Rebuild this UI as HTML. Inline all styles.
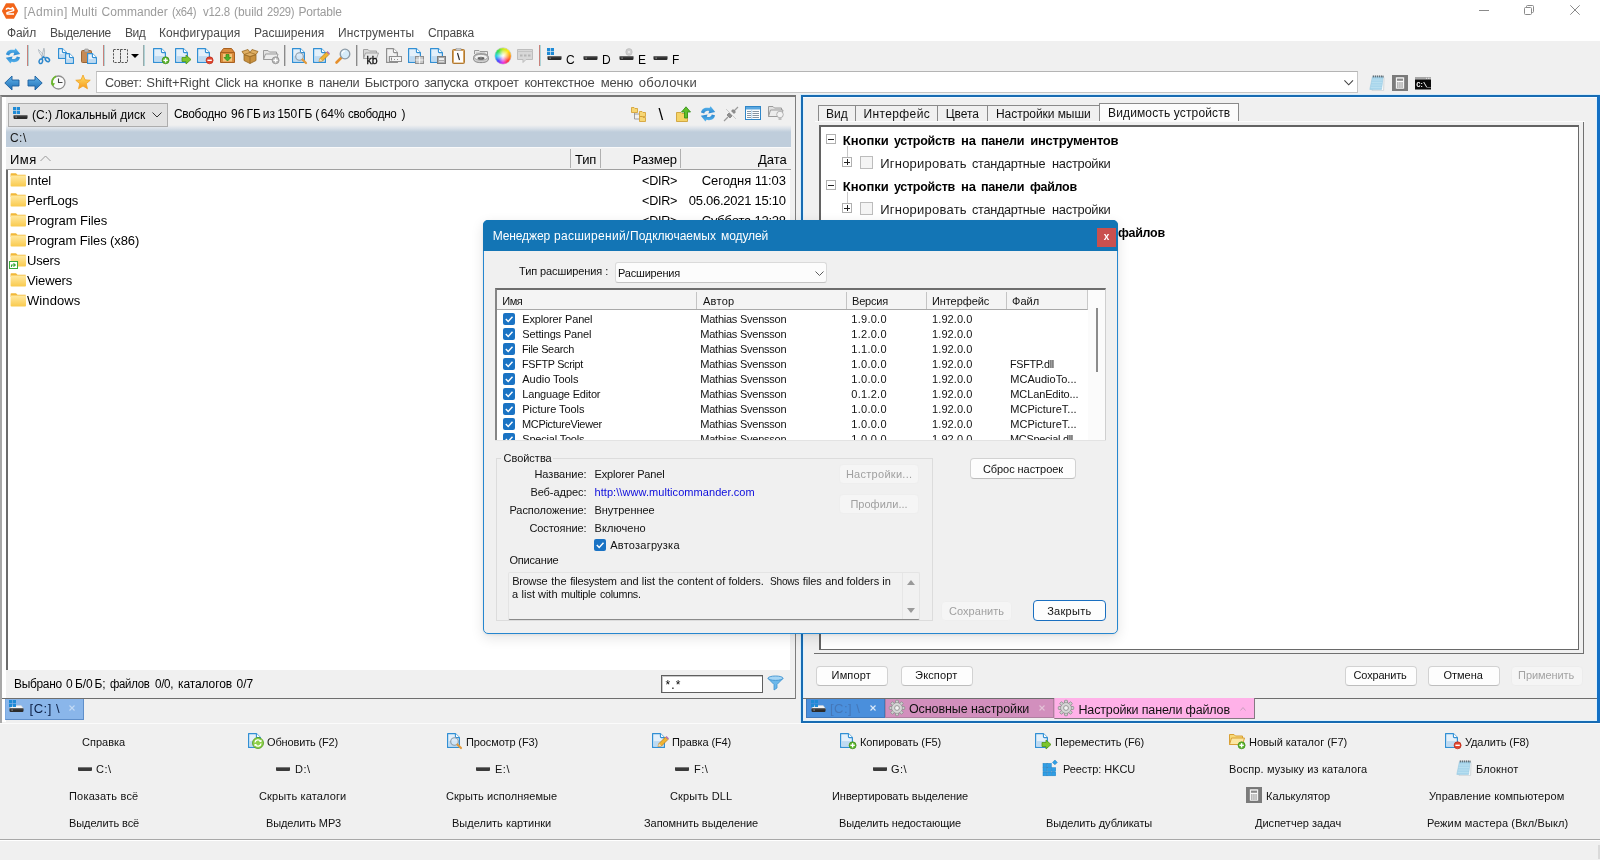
<!DOCTYPE html>
<html lang="ru"><head><meta charset="utf-8"><title>Multi Commander</title>
<style>
html,body{margin:0;padding:0;}
body{width:1600px;height:860px;overflow:hidden;background:#f0f0f0;position:relative;
 font-family:"Liberation Sans", "DejaVu Sans", sans-serif;font-size:12px;color:#000;}
#app{position:absolute;left:0;top:0;width:1600px;height:860px;will-change:transform;}
.b{position:absolute;box-sizing:border-box;}
.t{position:absolute;white-space:pre;}
svg{position:absolute;overflow:visible;}
</style></head>
<body>
<div id="app">
<div class="b " style="left:0px;top:0px;width:1600px;height:41px;background:#fff;"></div>
<svg style="left:2px;top:3px" width="16" height="16" viewBox="0 0 16 16"><path d="M4.6 1H11.4L15.2 8 11.4 15H4.6L.8 8Z" fill="#f2651a" stroke="#f2651a" stroke-width="1.6" stroke-linejoin="round"/><path d="M4 6.6C5 5 7 5 8 5.8L11.6 5.8M11.6 5.8L9.8 4.2M11.6 5.8V7.6L5 9.6V11H12" stroke="#fff" stroke-width="1.5" fill="none" stroke-linejoin="round"/></svg>
<span class="t" style="top:4px;line-height:16px;font-size:12px;color:#9b9b9b;letter-spacing:0.475px;left:23.7px;">[Admin]</span>
<span class="t" style="top:4px;line-height:16px;font-size:12px;color:#9b9b9b;letter-spacing:0.224px;left:71px;">Multi</span>
<span class="t" style="top:4px;line-height:16px;font-size:12px;color:#9b9b9b;letter-spacing:0.026px;left:101.5px;">Commander</span>
<span class="t" style="top:4px;line-height:16px;font-size:12px;color:#9b9b9b;letter-spacing:-0.300px;left:171.6px;transform:scaleX(0.9425);transform-origin:0 50%;">(x64)</span>
<span class="t" style="top:4px;line-height:16px;font-size:12px;color:#9b9b9b;letter-spacing:-0.300px;left:203.2px;transform:scaleX(0.9602);transform-origin:0 50%;">v12.8</span>
<span class="t" style="top:4px;line-height:16px;font-size:12px;color:#9b9b9b;letter-spacing:-0.064px;left:234px;">(build</span>
<span class="t" style="top:4px;line-height:16px;font-size:12px;color:#9b9b9b;letter-spacing:-0.300px;left:267px;transform:scaleX(0.9335);transform-origin:0 50%;">2929)</span>
<span class="t" style="top:4px;line-height:16px;font-size:12px;color:#9b9b9b;letter-spacing:-0.166px;left:298.5px;">Portable</span>
<svg style="left:1479px;top:4px" width="11" height="12" viewBox="0 0 11 12"><path d="M0 6.5H10" stroke="#8a8a8a" stroke-width="1"/></svg>
<svg style="left:1524px;top:5px" width="11" height="12" viewBox="0 0 11 12"><rect x=".5" y="2.5" width="7" height="7" rx="1" fill="none" stroke="#8a8a8a"/><path d="M2.5 2.5V1.5Q2.5 .5 3.5 .5H8.5Q9.5 .5 9.5 1.5V6.5Q9.5 7.5 8.5 7.5H7.5" fill="none" stroke="#8a8a8a"/></svg>
<svg style="left:1570px;top:5px" width="10" height="10" viewBox="0 0 10 10"><path d="M.3 .3L9.7 9.7M9.7 .3L.3 9.7" stroke="#8a8a8a" stroke-width="1"/></svg>
<span class="t" style="top:24.5px;line-height:16px;font-size:12px;color:#4a4a4a;letter-spacing:-0.092px;left:7px;">Файл</span>
<span class="t" style="top:24.5px;line-height:16px;font-size:12px;color:#4a4a4a;letter-spacing:-0.294px;left:50px;">Выделение</span>
<span class="t" style="top:24.5px;line-height:16px;font-size:12px;color:#4a4a4a;letter-spacing:-0.500px;left:125px;">Вид</span>
<span class="t" style="top:24.5px;line-height:16px;font-size:12px;color:#4a4a4a;letter-spacing:0.064px;left:159px;">Конфигурация</span>
<span class="t" style="top:24.5px;line-height:16px;font-size:12px;color:#4a4a4a;letter-spacing:0.049px;left:254px;">Расширения</span>
<span class="t" style="top:24.5px;line-height:16px;font-size:12px;color:#4a4a4a;letter-spacing:0.141px;left:338px;">Инструменты</span>
<span class="t" style="top:24.5px;line-height:16px;font-size:12px;color:#4a4a4a;letter-spacing:-0.140px;left:428px;">Справка</span>
<svg style="left:5px;top:48px" width="16" height="16" viewBox="0 0 16 16"><defs><linearGradient id="rfg" x1="0" y1="0" x2="0" y2="1"><stop offset="0" stop-color="#5bb8f0"/><stop offset="1" stop-color="#2c88d0"/></linearGradient></defs><path d="M1 6.6C1.4 2.8 5.2 .8 9.4 2L10.6 .2 15.2 6 8.4 7.4 9.2 5C7 4.3 4.8 5.2 4.2 7.4Z" fill="url(#rfg)"/><path d="M1 6.6C1.4 2.8 5.2 .8 9.4 2L10.6 .2 15.2 6 8.4 7.4 9.2 5C7 4.3 4.8 5.2 4.2 7.4Z" transform="rotate(180 8 7.9)" fill="url(#rfg)"/></svg>
<svg style="left:27px;top:45px" width="3" height="21" viewBox="0 0 3 21"><path d="M.5 0V21" stroke="#c8807a"/><path d="M1.5 0V21" stroke="#7bbcc4" opacity=".55"/></svg>
<svg style="left:35px;top:48px" width="16" height="16" viewBox="0 0 16 16"><g transform="rotate(-14 8 8)"><path d="M5.2 .6C4.6 3 6 7 8.6 10.4L9.8 9.2C8.2 6 6.6 3 5.2 .6Z" fill="#eef1f4" stroke="#9aa5ae" stroke-width=".6"/><path d="M10.8 .6C11.4 3 10 7 7.4 10.4L6.2 9.2C7.8 6 9.4 3 10.8 .6Z" fill="#dfe4e8" stroke="#9aa5ae" stroke-width=".6"/><ellipse cx="4.6" cy="12.6" rx="1.7" ry="2.3" transform="rotate(35 4.6 12.6)" fill="none" stroke="#2d87cc" stroke-width="1.5"/><ellipse cx="11.4" cy="12.6" rx="1.7" ry="2.3" transform="rotate(-35 11.4 12.6)" fill="none" stroke="#2d87cc" stroke-width="1.5"/><path d="M6 10.8L8 8.8 10 10.8" stroke="#2d87cc" stroke-width="1.4" fill="none"/></g></svg>
<svg style="left:58px;top:48px" width="16" height="16" viewBox="0 0 16 16"><path d="M0.6 0.6H4.4L8.4 4.6V10.4H0.6Z" fill="#e4f0fa" stroke="#318fd4" stroke-width="1.2" stroke-linejoin="round"/><path d="M1.6 6.1H7.4V9.4H1.6Z" fill="#b4d5ef" opacity=".8"/><path d="M4.4 0.6V3.5999999999999996Q4.4 4.6 5.4 4.6H8.4" fill="#fff" stroke="#318fd4" stroke-width="1.1"/><path d="M7.6 5.6H11.4L15.4 9.6V15.4H7.6Z" fill="#e4f0fa" stroke="#318fd4" stroke-width="1.2" stroke-linejoin="round"/><path d="M8.6 11.1H14.4V14.4H8.6Z" fill="#b4d5ef" opacity=".8"/><path d="M11.4 5.6V8.6Q11.4 9.6 12.4 9.6H15.4" fill="#fff" stroke="#318fd4" stroke-width="1.1"/></svg>
<svg style="left:81px;top:48px" width="16" height="16" viewBox="0 0 16 16"><rect x=".5" y="2.5" width="10" height="12" rx="1" fill="#c58a55" stroke="#9a6534"/><rect x="3.5" y="1" width="4" height="3" rx="1" fill="#b9b9b9" stroke="#8a8a8a" stroke-width=".6"/><path d="M6.6 5.6H11.4L15.4 9.6V15.4H6.6Z" fill="#e4f0fa" stroke="#318fd4" stroke-width="1.2" stroke-linejoin="round"/><path d="M7.6 11.1H14.4V14.4H7.6Z" fill="#b4d5ef" opacity=".8"/><path d="M11.4 5.6V8.6Q11.4 9.6 12.4 9.6H15.4" fill="#fff" stroke="#318fd4" stroke-width="1.1"/></svg>
<svg style="left:103px;top:45px" width="3" height="21" viewBox="0 0 3 21"><path d="M.5 0V21" stroke="#c8807a"/><path d="M1.5 0V21" stroke="#7bbcc4" opacity=".55"/></svg>
<svg style="left:113px;top:48px" width="16" height="16" viewBox="0 0 16 16"><rect x=".5" y="1.5" width="7" height="13" fill="none" stroke="#555" stroke-dasharray="2.2 1.2"/><rect x="7.5" y="1.5" width="7" height="13" fill="none" stroke="#555" stroke-dasharray="2.2 1.2"/></svg>
<svg style="left:131px;top:54px" width="8" height="4" viewBox="0 0 8 4"><path d="M0 0H8L4 4Z" fill="#000"/></svg>
<svg style="left:143px;top:45px" width="3" height="21" viewBox="0 0 3 21"><path d="M.5 0V21" stroke="#9aa"/><path d="M1.5 0V21" stroke="#7bbcc4" opacity=".55"/></svg>
<svg style="left:153px;top:48px" width="16" height="16" viewBox="0 0 16 16"><path d="M0.6 0.6H8.4L12.4 4.6V14.4H0.6Z" fill="#e4f0fa" stroke="#318fd4" stroke-width="1.2" stroke-linejoin="round"/><path d="M1.6 8.1H11.4V13.4H1.6Z" fill="#b4d5ef" opacity=".8"/><path d="M8.4 0.6V3.5999999999999996Q8.4 4.6 9.4 4.6H12.4" fill="#fff" stroke="#318fd4" stroke-width="1.1"/><circle cx="12.6" cy="12.3" r="3.5" fill="#5cb52c" stroke="#3a8a18" stroke-width=".7"/><path d="M10.399999999999999 12.3h4.4" stroke="#fff" stroke-width="1.4"/><path d="M12.6 10.100000000000001v4.4" stroke="#fff" stroke-width="1.4"/></svg>
<svg style="left:175px;top:48px" width="16" height="16" viewBox="0 0 16 16"><path d="M0.6 0.6H8.4L12.4 4.6V14.4H0.6Z" fill="#e4f0fa" stroke="#318fd4" stroke-width="1.2" stroke-linejoin="round"/><path d="M1.6 8.1H11.4V13.4H1.6Z" fill="#b4d5ef" opacity=".8"/><path d="M8.4 0.6V3.5999999999999996Q8.4 4.6 9.4 4.6H12.4" fill="#fff" stroke="#318fd4" stroke-width="1.1"/><path d="M7 9.5H11V7L16 11.5 11 16V13.5H7Z" fill="#7cc62c" stroke="#4b9417" stroke-width=".8"/></svg>
<svg style="left:197px;top:48px" width="16" height="16" viewBox="0 0 16 16"><path d="M0.6 0.6H8.4L12.4 4.6V14.4H0.6Z" fill="#e4f0fa" stroke="#318fd4" stroke-width="1.2" stroke-linejoin="round"/><path d="M1.6 8.1H11.4V13.4H1.6Z" fill="#b4d5ef" opacity=".8"/><path d="M8.4 0.6V3.5999999999999996Q8.4 4.6 9.4 4.6H12.4" fill="#fff" stroke="#318fd4" stroke-width="1.1"/><circle cx="12.6" cy="12.3" r="3.5" fill="#e2452f" stroke="#b52a18" stroke-width=".7"/><path d="M10.399999999999999 12.3h4.4" stroke="#fff" stroke-width="1.4"/></svg>
<svg style="left:220px;top:48px" width="16" height="16" viewBox="0 0 16 16"><path d="M.5 4.5L3.5 .5H11.5L14.5 4.5V14.5H.5Z" fill="#d98a3c" stroke="#a8601f"/><path d="M.5 4.5H14.5" stroke="#a8601f"/><rect x="3" y="6" width="9" height="7.5" fill="#f3c47a"/><path d="M6 6.5H9V9.5H11L7.5 13 4 9.5H6Z" fill="#4caf2a" stroke="#2f8414" stroke-width=".7"/></svg>
<svg style="left:242px;top:48px" width="16" height="16" viewBox="0 0 16 16"><path d="M2 6.5L8 8.5 14 6.5V12.5L8 15.5 2 12.5Z" fill="#c9913f" stroke="#96651f" stroke-width=".8"/><path d="M8 8.5V15.5" stroke="#96651f" stroke-width=".8"/><path d="M2 6.5L0 3.5 6 1.5 8 4.5 10 1.5 16 3.5 14 6.5 8 8.5Z" fill="#e0b064" stroke="#96651f" stroke-width=".8"/><path d="M8 4.5L2 6.5M8 4.5L14 6.5" stroke="#96651f" stroke-width=".7"/></svg>
<svg style="left:263px;top:48px" width="16" height="16" viewBox="0 0 16 16"><path d="M.5 2.5H5L6.5 4H13.5V11.5H.5Z" fill="#e3e3e3" stroke="#9c9c9c"/><path d="M2.5 6H15L13.5 11.5H.5Z" fill="#ededed" stroke="#9c9c9c"/><circle cx="12.6" cy="12.3" r="3.5" fill="#b5b5b5" stroke="#8a8a8a" stroke-width=".7"/><path d="M10.399999999999999 12.3h4.4" stroke="#fff" stroke-width="1.4"/><path d="M12.6 10.100000000000001v4.4" stroke="#fff" stroke-width="1.4"/></svg>
<svg style="left:284px;top:45px" width="3" height="21" viewBox="0 0 3 21"><path d="M.5 0V21" stroke="#8a8a8a"/><path d="M1.5 0V21" stroke="#c9c9c9"/></svg>
<svg style="left:292px;top:48px" width="16" height="16" viewBox="0 0 16 16"><path d="M0.6 0.6H8.4L12.4 4.6V14.4H0.6Z" fill="#e4f0fa" stroke="#318fd4" stroke-width="1.2" stroke-linejoin="round"/><path d="M1.6 8.1H11.4V13.4H1.6Z" fill="#b4d5ef" opacity=".8"/><path d="M8.4 0.6V3.5999999999999996Q8.4 4.6 9.4 4.6H12.4" fill="#fff" stroke="#318fd4" stroke-width="1.1"/><circle cx="7.5" cy="8.5" r="3.8" fill="#d7e9f7" fill-opacity=".8" stroke="#8a9aa8" stroke-width="1.1"/><path d="M10.5 11.5L14 15" stroke="#e39a3c" stroke-width="2.2" stroke-linecap="round"/></svg>
<svg style="left:313px;top:48px" width="16" height="16" viewBox="0 0 16 16"><path d="M0.6 0.6H8.4L12.4 4.6V14.4H0.6Z" fill="#e4f0fa" stroke="#318fd4" stroke-width="1.2" stroke-linejoin="round"/><path d="M1.6 8.1H11.4V13.4H1.6Z" fill="#b4d5ef" opacity=".8"/><path d="M8.4 0.6V3.5999999999999996Q8.4 4.6 9.4 4.6H12.4" fill="#fff" stroke="#318fd4" stroke-width="1.1"/><path d="M6 13.5L7 10.5 13.5 4 16 6.5 9.5 13Z" fill="#f0b432" stroke="#b5761a" stroke-width=".7"/><path d="M13.5 4L14.5 3 17 5.5 16 6.5Z" fill="#b56ab0"/><path d="M6 13.5L7 10.5 9.5 13Z" fill="#f3dcb4"/></svg>
<svg style="left:335px;top:48px" width="16" height="16" viewBox="0 0 16 16"><path d="M6.5 9.5L1.5 14.5" stroke="#e58f2c" stroke-width="2.6" stroke-linecap="round"/><circle cx="10" cy="6" r="4.8" fill="#d6ecfa" stroke="#8d9ba6" stroke-width="1.3"/><path d="M7 5.5A3.2 3.2 0 0 1 10 3" stroke="#fff" stroke-width="1.2" fill="none"/></svg>
<svg style="left:356px;top:45px" width="3" height="21" viewBox="0 0 3 21"><path d="M.5 0V21" stroke="#8a8a8a"/><path d="M1.5 0V21" stroke="#c9c9c9"/></svg>
<svg style="left:363px;top:48px" width="16" height="16" viewBox="0 0 16 16"><path d="M.5 1.5H5L6.5 3H13.5V10.5H.5Z" fill="#d7d7d7" stroke="#a2a2a2"/><path d="M2.5 5H15.5L13.5 10.5H.5Z" fill="#e6e6e6" stroke="#a2a2a2"/><text x="3.5" y="15.5" font-size="10.5" font-family="Liberation Sans, sans-serif" fill="#111" stroke="#111" stroke-width=".3">kb</text></svg>
<svg style="left:386px;top:48px" width="16" height="16" viewBox="0 0 16 16"><path d="M0.6 0.6H7.4L11.4 4.6V14.4H0.6Z" fill="#f2f2f2" stroke="#8f8f8f" stroke-width="1.2" stroke-linejoin="round"/><path d="M1.6 8.1H10.4V13.4H1.6Z" fill="#d9d9d9" opacity=".8"/><path d="M7.4 0.6V3.5999999999999996Q7.4 4.6 8.4 4.6H11.4" fill="#fff" stroke="#8f8f8f" stroke-width="1.1"/><rect x="3.5" y="8.5" width="12" height="5" fill="#f4f4f4" stroke="#8f8f8f"/><path d="M5.5 10V12M5 10H6M5 12H6M8 11.5H9M11 11.5H12" stroke="#777" stroke-width=".8"/></svg>
<svg style="left:408px;top:48px" width="16" height="16" viewBox="0 0 16 16"><path d="M0.6 0.6H8.4L12.4 4.6V14.4H0.6Z" fill="#e4f0fa" stroke="#318fd4" stroke-width="1.2" stroke-linejoin="round"/><path d="M1.6 8.1H11.4V13.4H1.6Z" fill="#b4d5ef" opacity=".8"/><path d="M8.4 0.6V3.5999999999999996Q8.4 4.6 9.4 4.6H12.4" fill="#fff" stroke="#318fd4" stroke-width="1.1"/><rect x="7.5" y="8.5" width="8" height="7" fill="#c9c9c9" stroke="#8f8f8f"/><path d="M11.5 8.5V15.5M7.5 12H15.5" stroke="#f4f4f4" stroke-width="1.2"/></svg>
<svg style="left:430px;top:48px" width="16" height="16" viewBox="0 0 16 16"><path d="M0.6 0.6H8.4L12.4 4.6V14.4H0.6Z" fill="#e4f0fa" stroke="#318fd4" stroke-width="1.2" stroke-linejoin="round"/><path d="M1.6 8.1H11.4V13.4H1.6Z" fill="#b4d5ef" opacity=".8"/><path d="M8.4 0.6V3.5999999999999996Q8.4 4.6 9.4 4.6H12.4" fill="#fff" stroke="#318fd4" stroke-width="1.1"/><rect x="7.5" y="8.5" width="8" height="7" fill="#a9a9a9" stroke="#7c7c7c"/><rect x="9" y="10" width="5" height="2" fill="#efefef"/><rect x="9" y="13" width="5" height="1.2" fill="#dcdcdc"/></svg>
<svg style="left:451px;top:48px" width="16" height="16" viewBox="0 0 16 16"><rect x="1.5" y="1.5" width="12" height="14" rx="1" fill="#d9a55f" stroke="#b07a34"/><rect x="3" y="3" width="9" height="11.5" fill="#fdfdfd"/><rect x="5" y=".5" width="5" height="2" fill="#c9c9c9" stroke="#9a9a9a" stroke-width=".5"/><path d="M6.5 5L8.5 12" stroke="#222" stroke-width="1.1"/></svg>
<svg style="left:473px;top:48px" width="16" height="16" viewBox="0 0 16 16"><path d="M1.5 6V2.5H6L7 3.5H14.5V7" fill="#e9e9e9" stroke="#9a9a9a"/><path d="M3 5.5H13M3 4.5H12" stroke="#c9c9c9" stroke-width=".7"/><path d="M.6 9.5C.6 6.5 4 5.8 8 5.8S15.4 6.5 15.4 9.5V11C15.4 13.6 12 14.6 8 14.6S.6 13.6 .6 11Z" fill="#cfcfcf" stroke="#7f7f7f" stroke-width=".9"/><ellipse cx="8" cy="9.3" rx="6.6" ry="2.9" fill="#f1f1f1" stroke="#8f8f8f" stroke-width=".7"/><ellipse cx="8" cy="10.2" rx="3.4" ry="1.5" fill="#5e5e5e"/><ellipse cx="8" cy="9.8" rx="1.6" ry=".6" fill="#9a9a9a"/></svg>
<div class="b" style="left:495px;top:48px;width:16px;height:16px;border-radius:50%;background:radial-gradient(circle,#fff 0,rgba(255,255,255,.7) 20%,rgba(255,255,255,0) 58%),conic-gradient(#c6ea2a 0deg,#ffe61a 45deg,#ff9a1a 90deg,#ff3a3a 135deg,#e63ae6 180deg,#4a4aff 225deg,#2ad4e6 270deg,#3ade4a 315deg,#c6ea2a 360deg);box-shadow:0 0 0 .5px rgba(90,90,90,.35);"></div>
<svg style="left:517px;top:48px" width="16" height="16" viewBox="0 0 16 16"><path d="M.5 1.5H15.5V11.5H9L6 14.5V11.5H.5Z" fill="#d8d8d8" stroke="#bdbdbd"/><path d="M.5 3.5H15.5" stroke="#c4c4c4"/><rect x="3" y="6.5" width="2.5" height="2" fill="#b5b5b5"/><rect x="7" y="6.5" width="2.5" height="2" fill="#b5b5b5"/><rect x="11" y="6.5" width="2.5" height="2" fill="#b5b5b5"/></svg>
<svg style="left:539px;top:45px" width="3" height="21" viewBox="0 0 3 21"><path d="M.5 0V21" stroke="#c8807a"/><path d="M1.5 0V21" stroke="#7bbcc4" opacity=".55"/></svg>
<svg style="left:546px;top:48px" width="16" height="16" viewBox="0 0 16 16"><rect x="1" y="0" width="3.2" height="3.2" fill="#1e8ad6"/><rect x="4.8" y="0" width="3.2" height="3.2" fill="#1e8ad6"/><rect x="1" y="3.8" width="3.2" height="3.2" fill="#1e8ad6"/><rect x="4.8" y="3.8" width="3.2" height="3.2" fill="#1e8ad6"/><rect x="1.5" y="8.3" width="14" height="3.6" rx=".8" fill="#2b2b2b"/><rect x="1.5" y="8.3" width="14" height="1" rx=".5" fill="#6a6a6a"/><rect x="3.5" y="9.6" width="1.2" height="1" fill="#bdbdbd"/></svg>
<span class="t" style="top:51.5px;line-height:16px;font-size:12px;color:#000;left:566px;">C</span>
<svg style="left:582px;top:48px" width="16" height="16" viewBox="0 0 16 16"><rect x="1.5" y="8.3" width="14" height="3.6" rx=".8" fill="#2b2b2b"/><rect x="1.5" y="8.3" width="14" height="1" rx=".5" fill="#6a6a6a"/><rect x="3.5" y="9.6" width="1.2" height="1" fill="#bdbdbd"/></svg>
<span class="t" style="top:51.5px;line-height:16px;font-size:12px;color:#000;left:602px;">D</span>
<svg style="left:618px;top:48px" width="16" height="16" viewBox="0 0 16 16"><ellipse cx="11" cy="4" rx="3.2" ry="3.4" fill="#cfcfcf" stroke="#b3b3b3" stroke-width=".6"/><circle cx="11" cy="4" r="1" fill="#f0f0f0"/><rect x="1.5" y="8.3" width="14" height="3.6" rx=".8" fill="#2b2b2b"/><rect x="1.5" y="8.3" width="14" height="1" rx=".5" fill="#6a6a6a"/><rect x="3.5" y="9.6" width="1.2" height="1" fill="#bdbdbd"/></svg>
<span class="t" style="top:51.5px;line-height:16px;font-size:12px;color:#000;left:638px;">E</span>
<svg style="left:652px;top:48px" width="16" height="16" viewBox="0 0 16 16"><rect x="1.5" y="8.3" width="14" height="3.6" rx=".8" fill="#2b2b2b"/><rect x="1.5" y="8.3" width="14" height="1" rx=".5" fill="#6a6a6a"/><rect x="3.5" y="9.6" width="1.2" height="1" fill="#bdbdbd"/></svg>
<span class="t" style="top:51.5px;line-height:16px;font-size:12px;color:#000;left:672px;">F</span>
<svg style="left:4px;top:75px" width="16" height="16" viewBox="0 0 16 16"><defs><linearGradient id="abg" x1="0" y1="0" x2="0" y2="1"><stop offset="0" stop-color="#5fb2ea"/><stop offset="1" stop-color="#1f6fb5"/></linearGradient></defs><path d="M.8 8L8 1V5H15V11H8V15Z" fill="url(#abg)" stroke="#1c5f9d" stroke-width=".9" stroke-linejoin="round"/></svg>
<svg style="left:27px;top:75px" width="16" height="16" viewBox="0 0 16 16"><path d="M15.2 8L8 1V5H1V11H8V15Z" fill="url(#abg)" stroke="#1c5f9d" stroke-width=".9" stroke-linejoin="round"/></svg>
<svg style="left:50px;top:74px" width="16" height="16" viewBox="0 0 16 16"><circle cx="8.5" cy="8.5" r="6.5" fill="#fafafa" stroke="#8f8f8f" stroke-width="1.3"/><path d="M8.5 4.5V8.5H12.5" stroke="#444" stroke-width="1.1" fill="none"/><path d="M6 2.2A6.8 6.8 0 0 0 2.5 11" stroke="#6ab82c" stroke-width="1.8" fill="none"/><path d="M.8 9L3 12.5 5 9.2Z" fill="#6ab82c"/></svg>
<svg style="left:75px;top:74px" width="16" height="16" viewBox="0 0 16 16"><defs><linearGradient id="stg" x1="0" y1="0" x2="0" y2="1"><stop offset="0" stop-color="#ffe36a"/><stop offset="1" stop-color="#f79a1c"/></linearGradient></defs><polygon points="8.00,1.00 10.00,5.85 15.23,6.25 11.23,9.65 12.47,14.75 8.00,12.00 3.53,14.75 4.77,9.65 0.77,6.25 6.00,5.85" fill="url(#stg)" stroke="#f0a020" stroke-width=".8" stroke-linejoin="round"/></svg>
<div class="b " style="left:96px;top:71px;width:1262px;height:22px;background:#fff;border:1px solid #c6c6c6;border-top-color:#b4b4b4;"></div>
<span class="t" style="top:73.5px;line-height:17px;font-size:13px;color:#484848;letter-spacing:-0.300px;left:104.6px;transform:scaleX(0.9663);transform-origin:0 50%;">Совет:</span>
<span class="t" style="top:73.5px;line-height:17px;font-size:13px;color:#484848;letter-spacing:-0.069px;left:146.3px;">Shift+Right</span>
<span class="t" style="top:73.5px;line-height:17px;font-size:13px;color:#484848;letter-spacing:-0.300px;left:214.8px;transform:scaleX(0.9365);transform-origin:0 50%;">Click</span>
<span class="t" style="top:73.5px;line-height:17px;font-size:13px;color:#484848;left:-148.9px;width:800px;text-align:center;">на</span>
<span class="t" style="top:73.5px;line-height:17px;font-size:13px;color:#484848;letter-spacing:-0.069px;left:262.4px;">кнопке</span>
<span class="t" style="top:73.5px;line-height:17px;font-size:13px;color:#484848;left:-89.6px;width:800px;text-align:center;">в</span>
<span class="t" style="top:73.5px;line-height:17px;font-size:13px;color:#484848;letter-spacing:-0.300px;left:319px;transform:scaleX(0.9772);transform-origin:0 50%;">панели</span>
<span class="t" style="top:73.5px;line-height:17px;font-size:13px;color:#484848;letter-spacing:-0.300px;left:364.8px;">Быстрого</span>
<span class="t" style="top:73.5px;line-height:17px;font-size:13px;color:#484848;letter-spacing:-0.300px;left:424.2px;">запуска</span>
<span class="t" style="top:73.5px;line-height:17px;font-size:13px;color:#484848;letter-spacing:-0.159px;left:474.2px;">откроет</span>
<span class="t" style="top:73.5px;line-height:17px;font-size:13px;color:#484848;letter-spacing:-0.296px;left:524.5px;">контекстное</span>
<span class="t" style="top:73.5px;line-height:17px;font-size:13px;color:#484848;letter-spacing:-0.183px;left:600.8px;">меню</span>
<span class="t" style="top:73.5px;line-height:17px;font-size:13px;color:#484848;letter-spacing:0.261px;left:638.8px;">оболочки</span>
<svg style="left:1344px;top:79.6px" width="10" height="6" viewBox="0 0 10 6"><path d="M.4 .4L4.7 4.8 9 .4" fill="none" stroke="#444" stroke-width="1.1"/></svg>
<svg style="left:1369px;top:75px" width="16" height="16" viewBox="0 0 16 16"><path d="M4.2 2.6H15L14.6 15.4H3Z" fill="#fdfdfd" stroke="#b9c2c8" stroke-width=".6"/><path d="M3.4 1.8H14.2L12.6 14.4H.8Z" fill="#a9d6ec" stroke="#8fc3dd" stroke-width=".5"/><path d="M3 5H13.6M2.6 7.5H13.3M2.2 10H13M1.8 12.5H12.7" stroke="#bfe2f2" stroke-width=".7"/><path d="M4.3 .4V2.4M6.3 .4V2.4M8.3 .4V2.4M10.3 .4V2.4M12.3 .4V2.4M14 .6V2.4" stroke="#3c464e" stroke-width=".9"/></svg>
<svg style="left:1392px;top:75px" width="16" height="16" viewBox="0 0 16 16"><rect x="0" y="0" width="16" height="16" fill="#7b7b7b"/><rect x="3.6" y="2" width="8.8" height="12" rx=".8" fill="#fbfbfb" stroke="#6a6a6a" stroke-width=".5"/><rect x="5" y="3.6" width="6" height="2.2" fill="#8a8a8a"/><rect x="5.2" y="7.4" width="1.3" height="1.2" fill="#6f6f6f"/><rect x="7.3" y="7.4" width="1.3" height="1.2" fill="#6f6f6f"/><rect x="9.4" y="7.4" width="1.3" height="1.2" fill="#6f6f6f"/><rect x="5.2" y="9.4" width="1.3" height="1.2" fill="#6f6f6f"/><rect x="7.3" y="9.4" width="1.3" height="1.2" fill="#6f6f6f"/><rect x="9.4" y="9.4" width="1.3" height="1.2" fill="#6f6f6f"/><rect x="5.2" y="11.4" width="1.3" height="1.2" fill="#6f6f6f"/><rect x="7.3" y="11.4" width="1.3" height="1.2" fill="#6f6f6f"/><rect x="9.4" y="11.4" width="1.3" height="1.2" fill="#6f6f6f"/></svg>
<svg style="left:1415px;top:75px" width="16" height="16" viewBox="0 0 16 16"><rect x="0" y="2" width="16" height="12.5" fill="#0a0a0a"/><rect x="0" y="2" width="16" height="2.6" fill="#a6a6a6"/><path d="M11 3.3H12M13 3.3H14M14.6 3.3H15.4" stroke="#f0f0f0" stroke-width=".9"/><text x="1.2" y="11.8" font-size="7.2" font-weight="700" font-family="Liberation Mono, monospace" letter-spacing="-.9" fill="#fff">C:\_</text></svg>
<div class="b " style="left:0px;top:95px;width:796.3px;height:628px;border-left:2px solid #a8a8a8;border-top:2px solid #767676;background:#f0f0f0;"></div>
<div class="b " style="left:795.3px;top:97px;width:1px;height:602px;background:#7e7e7e;"></div>
<div class="b " style="left:2px;top:97px;width:3.5px;height:625px;background:#fff;"></div>
<div class="b " style="left:2px;top:698px;width:793.3px;height:1px;background:#6e6e6e;"></div>
<div class="b " style="left:6px;top:125px;width:785px;height:21.7px;background:linear-gradient(#f0f0f0 0,#dde3ea 3px,#bfcddb 7px,#bfcddb 100%);box-shadow:0 1px 0 #fafafa;"></div>
<div class="b " style="left:8px;top:103px;width:160px;height:24px;background:#e2e2e2;border:1px solid #adadad;"></div>
<svg style="left:12px;top:107px" width="16" height="16" viewBox="0 0 16 16"><rect x="1" y="0" width="3.2" height="3.2" fill="#1e8ad6"/><rect x="4.8" y="0" width="3.2" height="3.2" fill="#1e8ad6"/><rect x="1" y="3.8" width="3.2" height="3.2" fill="#1e8ad6"/><rect x="4.8" y="3.8" width="3.2" height="3.2" fill="#1e8ad6"/><rect x="1.5" y="8.3" width="14" height="3.6" rx=".8" fill="#2b2b2b"/><rect x="1.5" y="8.3" width="14" height="1" rx=".5" fill="#6a6a6a"/><rect x="3.5" y="9.6" width="1.2" height="1" fill="#bdbdbd"/></svg>
<span class="t" style="top:107px;line-height:16px;font-size:12px;color:#000;letter-spacing:-0.018px;left:32px;">(C:) Локальный диск</span>
<svg style="left:152px;top:112px" width="10" height="6" viewBox="0 0 10 6"><path d="M.5 .5L5 5 9.5 .5" fill="none" stroke="#333" stroke-width="1"/></svg>
<span class="t" style="top:106px;line-height:16px;font-size:12px;color:#000;letter-spacing:-0.300px;left:174.4px;transform:scaleX(0.9956);transform-origin:0 50%;">Свободно</span>
<span class="t" style="top:106px;line-height:16px;font-size:12px;color:#000;left:-162.3px;width:800px;text-align:center;">96</span>
<span class="t" style="top:106px;line-height:16px;font-size:12px;color:#000;left:-146.25px;width:800px;text-align:center;">ГБ</span>
<span class="t" style="top:106px;line-height:16px;font-size:12px;color:#000;left:-131.15px;width:800px;text-align:center;">из</span>
<span class="t" style="top:106px;line-height:16px;font-size:12px;color:#000;left:-112.8px;width:800px;text-align:center;">150</span>
<span class="t" style="top:106px;line-height:16px;font-size:12px;color:#000;left:-94.85px;width:800px;text-align:center;">ГБ</span>
<span class="t" style="top:106px;line-height:16px;font-size:12px;color:#000;left:-82.8px;width:800px;text-align:center;">(</span>
<span class="t" style="top:106px;line-height:16px;font-size:12px;color:#000;left:-67.35px;width:800px;text-align:center;">64%</span>
<span class="t" style="top:106px;line-height:16px;font-size:12px;color:#000;letter-spacing:-0.300px;left:348.1px;transform:scaleX(0.9671);transform-origin:0 50%;">свободно</span>
<span class="t" style="top:106px;line-height:16px;font-size:12px;color:#000;left:3.4px;width:800px;text-align:center;">)</span>
<svg style="left:630.5px;top:105.5px" width="16" height="16" viewBox="0 0 16 16"><path d="M0.5 1.5H3L4 2.5H6.5V6.5H0.5Z" fill="#f7d674" stroke="#d19a2a" stroke-width=".8"/><path d="M8.5 5.5H11L12 6.5H14.5V10.5H8.5Z" fill="#f7d674" stroke="#d19a2a" stroke-width=".8"/><path d="M8.5 10.5H11L12 11.5H14.5V15.5H8.5Z" fill="#f7d674" stroke="#d19a2a" stroke-width=".8"/><path d="M3.5 7V13H8M3.5 8H8" stroke="#8a8a8a" stroke-width=".8" fill="none"/></svg>
<span class="t" style="top:103.5px;line-height:21px;font-size:17px;color:#000;left:658.5px;">\</span>
<svg style="left:676px;top:105.5px" width="16" height="16" viewBox="0 0 16 16"><path d="M.5 6.5H5L6 7.5H11.5V15.5H.5Z" fill="#f5d365" stroke="#c9992a" stroke-width=".8"/><path d="M8.5 12V6H5.5L10 .8 14.5 6H11.5V12Z" fill="#5fbf2a" stroke="#2f8a12" stroke-width=".8"/></svg>
<svg style="left:699.5px;top:105.5px" width="16" height="16" viewBox="0 0 16 16"><defs><linearGradient id="rfg" x1="0" y1="0" x2="0" y2="1"><stop offset="0" stop-color="#5bb8f0"/><stop offset="1" stop-color="#2c88d0"/></linearGradient></defs><path d="M1 6.6C1.4 2.8 5.2 .8 9.4 2L10.6 .2 15.2 6 8.4 7.4 9.2 5C7 4.3 4.8 5.2 4.2 7.4Z" fill="url(#rfg)"/><path d="M1 6.6C1.4 2.8 5.2 .8 9.4 2L10.6 .2 15.2 6 8.4 7.4 9.2 5C7 4.3 4.8 5.2 4.2 7.4Z" transform="rotate(180 8 7.9)" fill="url(#rfg)"/></svg>
<svg style="left:722.5px;top:105.5px" width="16" height="16" viewBox="0 0 16 16"><path d="M1 15L5 11M11 5L15 1" stroke="#9a9a9a" stroke-width="1.2"/><path d="M4 9L7 12 9.5 9.5 6.5 6.5Z" fill="#8f8f8f" stroke="#6a6a6a" stroke-width=".6"/><path d="M8.5 5L11 7.5 12.5 6 10 3.5Z" fill="#8f8f8f" stroke="#6a6a6a" stroke-width=".6"/><path d="M3 3L13 13" stroke="#c9c9c9" stroke-width="1"/></svg>
<svg style="left:745px;top:105px" width="16" height="16" viewBox="0 0 16 16"><rect x=".5" y="1.5" width="15" height="13" fill="#fff" stroke="#2f86c8"/><rect x="1" y="2" width="14" height="2.5" fill="#5aa7e0"/><path d="M2 6.5H6M2 8.5H6M2 10.5H6M2 12.5H6M7.5 6.5H14M7.5 8.5H14M7.5 10.5H14M7.5 12.5H14" stroke="#7a8a99" stroke-width=".9"/><path d="M6.7 4.5V14" stroke="#9fc6e6" stroke-width=".7"/></svg>
<svg style="left:768px;top:105px" width="16" height="16" viewBox="0 0 16 16"><path d="M.5 1.5H5L6.5 3H13.5V11.5H.5Z" fill="#e1e1e1" stroke="#9c9c9c"/><path d="M2.5 5H15L13.5 11.5H.5Z" fill="#ececec" stroke="#9c9c9c"/><circle cx="12" cy="9.5" r="3.3" fill="#f2f2f2" stroke="#a2a2a2" stroke-width=".8"/><rect x="10.5" y="12.5" width="3" height="2.5" fill="#bdbdbd"/></svg>
<span class="t" style="top:129.5px;line-height:16px;font-size:12px;color:#1a1a1a;letter-spacing:0.448px;left:10px;">C:\</span>
<div class="b " style="left:6px;top:148px;width:785px;height:22px;background:#f0f0f0;border-bottom:1px solid #a0a0a0;"></div>
<span class="t" style="top:150.5px;line-height:17px;font-size:13px;color:#000;letter-spacing:0.466px;left:10px;">Имя</span>
<svg style="left:40px;top:155px" width="11" height="7" viewBox="0 0 11 7"><path d="M.5 6L5.5 1 10.5 6" fill="none" stroke="#9a9a9a" stroke-width="1"/></svg>
<div class="b " style="left:570px;top:149px;width:1px;height:19px;background:#b0b0b0;"></div>
<div class="b " style="left:600px;top:149px;width:1px;height:19px;background:#b0b0b0;"></div>
<div class="b " style="left:680px;top:149px;width:1px;height:19px;background:#b0b0b0;"></div>
<span class="t" style="top:150.5px;line-height:17px;font-size:13px;color:#000;letter-spacing:-0.206px;left:575px;">Тип</span>
<span class="t" style="top:150.5px;line-height:17px;font-size:13px;color:#000;letter-spacing:-0.086px;right:923.071px;">Размер</span>
<span class="t" style="top:150.5px;line-height:17px;font-size:13px;color:#000;letter-spacing:-0.012px;right:813.297px;">Дата</span>
<div class="b " style="left:6px;top:170px;width:784px;height:500px;background:#fff;border-left:2px solid #6b6b6b;"></div>
<svg style="left:9.5px;top:172px" width="16" height="16" viewBox="0 0 16 16"><defs><linearGradient id="fdg" x1="0" y1="0" x2="0" y2="1"><stop offset="0" stop-color="#ffe9a2"/><stop offset="1" stop-color="#f9ca4e"/></linearGradient></defs><path d="M.6 2.2C.6 1.5 1 1.2 1.6 1.2H6L7.5 2.8H15.6V5H.6Z" fill="#f1b83a"/><rect x=".6" y="3.6" width="15.4" height="10.8" rx=".9" fill="url(#fdg)"/></svg>
<span class="t" style="top:171.5px;line-height:17px;font-size:13px;color:#000;letter-spacing:-0.080px;left:27px;">Intel</span>
<span class="t" style="top:171.5px;line-height:17px;font-size:13px;color:#000;letter-spacing:-0.300px;right:922.585px;transform:scaleX(0.9693);transform-origin:100% 50%;">&lt;DIR&gt;</span>
<span class="t" style="top:171.5px;line-height:17px;font-size:13px;color:#000;letter-spacing:-0.063px;right:814.048px;">Сегодня 11:03</span>
<svg style="left:9.5px;top:192px" width="16" height="16" viewBox="0 0 16 16"><defs><linearGradient id="fdg" x1="0" y1="0" x2="0" y2="1"><stop offset="0" stop-color="#ffe9a2"/><stop offset="1" stop-color="#f9ca4e"/></linearGradient></defs><path d="M.6 2.2C.6 1.5 1 1.2 1.6 1.2H6L7.5 2.8H15.6V5H.6Z" fill="#f1b83a"/><rect x=".6" y="3.6" width="15.4" height="10.8" rx=".9" fill="url(#fdg)"/></svg>
<span class="t" style="top:191.5px;line-height:17px;font-size:13px;color:#000;letter-spacing:-0.112px;left:27px;">PerfLogs</span>
<span class="t" style="top:191.5px;line-height:17px;font-size:13px;color:#000;letter-spacing:-0.300px;right:922.585px;transform:scaleX(0.9693);transform-origin:100% 50%;">&lt;DIR&gt;</span>
<span class="t" style="top:191.5px;line-height:17px;font-size:13px;color:#000;letter-spacing:-0.264px;right:814.249px;">05.06.2021 15:10</span>
<svg style="left:9.5px;top:212px" width="16" height="16" viewBox="0 0 16 16"><defs><linearGradient id="fdg" x1="0" y1="0" x2="0" y2="1"><stop offset="0" stop-color="#ffe9a2"/><stop offset="1" stop-color="#f9ca4e"/></linearGradient></defs><path d="M.6 2.2C.6 1.5 1 1.2 1.6 1.2H6L7.5 2.8H15.6V5H.6Z" fill="#f1b83a"/><rect x=".6" y="3.6" width="15.4" height="10.8" rx=".9" fill="url(#fdg)"/></svg>
<span class="t" style="top:211.5px;line-height:17px;font-size:13px;color:#000;letter-spacing:-0.055px;left:27px;">Program Files</span>
<span class="t" style="top:211.5px;line-height:17px;font-size:13px;color:#000;letter-spacing:-0.300px;right:922.585px;transform:scaleX(0.9693);transform-origin:100% 50%;">&lt;DIR&gt;</span>
<span class="t" style="top:211.5px;line-height:17px;font-size:13px;color:#000;letter-spacing:-0.234px;right:814.219px;">Суббота 12:28</span>
<svg style="left:9.5px;top:232px" width="16" height="16" viewBox="0 0 16 16"><defs><linearGradient id="fdg" x1="0" y1="0" x2="0" y2="1"><stop offset="0" stop-color="#ffe9a2"/><stop offset="1" stop-color="#f9ca4e"/></linearGradient></defs><path d="M.6 2.2C.6 1.5 1 1.2 1.6 1.2H6L7.5 2.8H15.6V5H.6Z" fill="#f1b83a"/><rect x=".6" y="3.6" width="15.4" height="10.8" rx=".9" fill="url(#fdg)"/></svg>
<span class="t" style="top:231.5px;line-height:17px;font-size:13px;color:#000;letter-spacing:-0.104px;left:27px;">Program Files (x86)</span>
<svg style="left:9.5px;top:252px" width="16" height="16" viewBox="0 0 16 16"><defs><linearGradient id="fdg" x1="0" y1="0" x2="0" y2="1"><stop offset="0" stop-color="#ffe9a2"/><stop offset="1" stop-color="#f9ca4e"/></linearGradient></defs><path d="M.6 2.2C.6 1.5 1 1.2 1.6 1.2H6L7.5 2.8H15.6V5H.6Z" fill="#f1b83a"/><rect x=".6" y="3.6" width="15.4" height="10.8" rx=".9" fill="url(#fdg)"/></svg>
<svg style="left:9px;top:261px" width="9" height="8" viewBox="0 0 9 8"><rect x=".5" y=".5" width="8" height="7" fill="#fff" stroke="#3aa83a"/><path d="M2.5 6V4H6M4.5 2.3L6.3 4 4.5 5.7" stroke="#3aa83a" stroke-width="1.1" fill="none"/></svg>
<span class="t" style="top:251.5px;line-height:17px;font-size:13px;color:#000;letter-spacing:-0.173px;left:27px;">Users</span>
<svg style="left:9.5px;top:272px" width="16" height="16" viewBox="0 0 16 16"><defs><linearGradient id="fdg" x1="0" y1="0" x2="0" y2="1"><stop offset="0" stop-color="#ffe9a2"/><stop offset="1" stop-color="#f9ca4e"/></linearGradient></defs><path d="M.6 2.2C.6 1.5 1 1.2 1.6 1.2H6L7.5 2.8H15.6V5H.6Z" fill="#f1b83a"/><rect x=".6" y="3.6" width="15.4" height="10.8" rx=".9" fill="url(#fdg)"/></svg>
<span class="t" style="top:271.5px;line-height:17px;font-size:13px;color:#000;letter-spacing:-0.126px;left:27px;">Viewers</span>
<svg style="left:9.5px;top:292px" width="16" height="16" viewBox="0 0 16 16"><defs><linearGradient id="fdg" x1="0" y1="0" x2="0" y2="1"><stop offset="0" stop-color="#ffe9a2"/><stop offset="1" stop-color="#f9ca4e"/></linearGradient></defs><path d="M.6 2.2C.6 1.5 1 1.2 1.6 1.2H6L7.5 2.8H15.6V5H.6Z" fill="#f1b83a"/><rect x=".6" y="3.6" width="15.4" height="10.8" rx=".9" fill="url(#fdg)"/></svg>
<span class="t" style="top:291.5px;line-height:17px;font-size:13px;color:#000;letter-spacing:0.085px;left:27px;">Windows</span>
<span class="t" style="top:676.2px;line-height:16px;font-size:12px;color:#000;letter-spacing:-0.300px;left:14.4px;transform:scaleX(0.9955);transform-origin:0 50%;">Выбрано</span>
<span class="t" style="top:676.2px;line-height:16px;font-size:12px;color:#000;left:-330.6px;width:800px;text-align:center;">0</span>
<span class="t" style="top:676.2px;line-height:16px;font-size:12px;color:#000;left:-316.15px;width:800px;text-align:center;">Б/0</span>
<span class="t" style="top:676.2px;line-height:16px;font-size:12px;color:#000;left:-299.95px;width:800px;text-align:center;">Б;</span>
<span class="t" style="top:676.2px;line-height:16px;font-size:12px;color:#000;letter-spacing:-0.300px;left:110px;transform:scaleX(0.9476);transform-origin:0 50%;">файлов</span>
<span class="t" style="top:676.2px;line-height:16px;font-size:12px;color:#000;letter-spacing:-0.300px;left:154.5px;transform:scaleX(0.9699);transform-origin:0 50%;">0/0,</span>
<span class="t" style="top:676.2px;line-height:16px;font-size:12px;color:#000;letter-spacing:-0.100px;left:178px;">каталогов</span>
<span class="t" style="top:676.2px;line-height:16px;font-size:12px;color:#000;left:-155.1px;width:800px;text-align:center;">0/7</span>
<div class="b " style="left:661px;top:675px;width:101.5px;height:18px;background:#fff;border:1px solid #5f5f5f;box-shadow:inset 1px 1px 0 #c8c8c8;"></div>
<span class="t" style="top:676.5px;line-height:16px;font-size:12px;color:#000;left:665.6px;letter-spacing:1.1px;">*.*</span>
<svg style="left:767.3px;top:675px" width="17" height="16" viewBox="0 0 17 16"><path d="M1 3.5L7 9.5V15L10 13V9.5L16 3.5Z" fill="#6db8ea" stroke="#3e93d0" stroke-width=".8"/><ellipse cx="8.5" cy="3.2" rx="7.5" ry="2.2" fill="#a7d6f5" stroke="#3e93d0" stroke-width=".9"/></svg>
<div class="b " style="left:5px;top:699px;width:79px;height:20.5px;background:#8ab6ea;border:1px solid #5f8fca;border-top:none;border-left-color:#7aa8e0;"></div>
<svg style="left:8px;top:699.5px" width="16" height="16" viewBox="0 0 16 16"><path d="M4 5.6H13.2L15.4 8.5H1.6Z" fill="#f4f4f4" stroke="#cfcfcf" stroke-width=".4"/><rect x="1" y="0" width="3.2" height="3.2" fill="#1e8ad6"/><rect x="4.8" y="0" width="3.2" height="3.2" fill="#1e8ad6"/><rect x="1" y="3.8" width="3.2" height="3.2" fill="#1e8ad6"/><rect x="4.8" y="3.8" width="3.2" height="3.2" fill="#1e8ad6"/><rect x="1.5" y="8.3" width="14" height="3.6" rx=".8" fill="#2b2b2b"/><rect x="1.5" y="8.3" width="14" height="1" rx=".5" fill="#6a6a6a"/><rect x="3.5" y="9.6" width="1.2" height="1" fill="#bdbdbd"/></svg>
<span class="t" style="top:700px;line-height:17px;font-size:13px;color:#0d2147;letter-spacing:0.501px;left:29.6px;">[C:] \</span>
<svg style="left:69px;top:705px" width="6" height="6" viewBox="0 0 6 6"><path d="M.5 .5L5.5 5.5M5.5 .5L.5 5.5" stroke="#c2d9f4" stroke-width="1.1"/></svg>
<div class="b " style="left:801px;top:95px;width:799px;height:628px;border:2px solid #176bb2;border-right:3px solid #1470c4;background:#f0f0f0;box-shadow:0 0 0 1px rgba(205,236,255,.75),inset 0 0 0 1px rgba(220,242,255,.9);"></div>
<div class="b " style="left:803px;top:97px;width:794px;height:1px;background:#f6fbff;"></div>
<div class="b " style="left:818px;top:105px;width:38px;height:16px;border:1px solid #8a8a8a;border-bottom:none;background:#f0f0f0;"></div>
<span class="t" style="top:105.5px;line-height:16px;font-size:12px;color:#111;letter-spacing:0.011px;left:826px;">Вид</span>
<div class="b " style="left:855px;top:105px;width:84px;height:16px;border:1px solid #8a8a8a;border-bottom:none;background:#f0f0f0;"></div>
<span class="t" style="top:105.5px;line-height:16px;font-size:12px;color:#111;letter-spacing:0.378px;left:863.5px;">Интерфейс</span>
<div class="b " style="left:937.3px;top:105px;width:50.7px;height:16px;border:1px solid #8a8a8a;border-bottom:none;background:#f0f0f0;"></div>
<span class="t" style="top:105.5px;line-height:16px;font-size:12px;color:#111;letter-spacing:-0.049px;left:945.7px;">Цвета</span>
<div class="b " style="left:987px;top:105px;width:113px;height:16px;border:1px solid #8a8a8a;border-bottom:none;background:#f0f0f0;"></div>
<span class="t" style="top:105.5px;line-height:16px;font-size:12px;color:#111;letter-spacing:-0.050px;left:996px;">Настройки мыши</span>
<div class="b " style="left:1099px;top:103px;width:140px;height:18px;border:1px solid #8a8a8a;border-bottom:none;background:#fcfcfc;"></div>
<span class="t" style="top:104.5px;line-height:16px;font-size:12px;color:#111;letter-spacing:0.141px;left:1108px;">Видимость устройств</span>
<div class="b " style="left:815px;top:121px;width:770px;height:1px;background:#fbfbfb;"></div>
<div class="b " style="left:814px;top:122px;width:770px;height:532px;border:1px solid #707070;border-top:none;border-left:none;"></div>
<div class="b " style="left:819px;top:125.4px;width:760px;height:524.6px;background:#fff;border:2px solid #636363;border-right:1px solid #696969;border-bottom:1px solid #696969;"></div>
<div class="b " style="left:826.3px;top:134.3px;width:10px;height:10px;background:#fff;border:1px solid #b0b0b0;"></div>
<div class="b " style="left:828.3px;top:138.8px;width:6px;height:1px;background:#222;"></div>
<span class="t" style="top:131.5px;line-height:17px;font-size:13px;color:#000;font-weight:700;letter-spacing:0.016px;left:842.7px;">Кнопки</span>
<span class="t" style="top:131.5px;line-height:17px;font-size:13px;color:#000;font-weight:700;letter-spacing:-0.300px;left:894.3px;transform:scaleX(0.9621);transform-origin:0 50%;">устройств</span>
<span class="t" style="top:131.5px;line-height:17px;font-size:13px;color:#000;font-weight:700;left:568.5px;width:800px;text-align:center;">на</span>
<span class="t" style="top:131.5px;line-height:17px;font-size:13px;color:#000;font-weight:700;letter-spacing:-0.300px;left:981.4px;transform:scaleX(0.9675);transform-origin:0 50%;">панели</span>
<span class="t" style="top:131.5px;line-height:17px;font-size:13px;color:#000;font-weight:700;letter-spacing:-0.250px;left:1030.2px;">инструментов</span>
<div class="b " style="left:847px;top:146px;width:1px;height:12px;background:#c8c8c8;"></div>
<div class="b " style="left:842.3px;top:157.2px;width:10px;height:10px;background:#fff;border:1px solid #b0b0b0;"></div>
<div class="b " style="left:844.3px;top:161.7px;width:6px;height:1px;background:#222;"></div>
<div class="b " style="left:846.8px;top:159.2px;width:1px;height:6px;background:#222;"></div>
<div class="b " style="left:860px;top:156px;width:13px;height:13px;background:#f4f4f4;border:1px solid #bcbcbc;"></div>
<span class="t" style="top:154.5px;line-height:17px;font-size:13px;color:#1a1a1a;letter-spacing:0.234px;left:880.2px;">Игнорировать</span>
<span class="t" style="top:154.5px;line-height:17px;font-size:13px;color:#1a1a1a;letter-spacing:-0.300px;left:972px;transform:scaleX(0.9770);transform-origin:0 50%;">стандартные</span>
<span class="t" style="top:154.5px;line-height:17px;font-size:13px;color:#1a1a1a;letter-spacing:-0.300px;left:1051.8px;transform:scaleX(0.9935);transform-origin:0 50%;">настройки</span>
<div class="b " style="left:826.3px;top:180.3px;width:10px;height:10px;background:#fff;border:1px solid #b0b0b0;"></div>
<div class="b " style="left:828.3px;top:184.8px;width:6px;height:1px;background:#222;"></div>
<span class="t" style="top:177.5px;line-height:17px;font-size:13px;color:#000;font-weight:700;letter-spacing:0.016px;left:842.7px;">Кнопки</span>
<span class="t" style="top:177.5px;line-height:17px;font-size:13px;color:#000;font-weight:700;letter-spacing:-0.300px;left:894.3px;transform:scaleX(0.9621);transform-origin:0 50%;">устройств</span>
<span class="t" style="top:177.5px;line-height:17px;font-size:13px;color:#000;font-weight:700;left:568.5px;width:800px;text-align:center;">на</span>
<span class="t" style="top:177.5px;line-height:17px;font-size:13px;color:#000;font-weight:700;letter-spacing:-0.300px;left:981.4px;transform:scaleX(0.9675);transform-origin:0 50%;">панели</span>
<span class="t" style="top:177.5px;line-height:17px;font-size:13px;color:#000;font-weight:700;letter-spacing:-0.300px;left:1030.2px;transform:scaleX(0.9580);transform-origin:0 50%;">файлов</span>
<div class="b " style="left:847px;top:192px;width:1px;height:12px;background:#c8c8c8;"></div>
<div class="b " style="left:842.3px;top:203.2px;width:10px;height:10px;background:#fff;border:1px solid #b0b0b0;"></div>
<div class="b " style="left:844.3px;top:207.7px;width:6px;height:1px;background:#222;"></div>
<div class="b " style="left:846.8px;top:205.2px;width:1px;height:6px;background:#222;"></div>
<div class="b " style="left:860px;top:202px;width:13px;height:13px;background:#f4f4f4;border:1px solid #bcbcbc;"></div>
<span class="t" style="top:200.5px;line-height:17px;font-size:13px;color:#1a1a1a;letter-spacing:0.234px;left:880.2px;">Игнорировать</span>
<span class="t" style="top:200.5px;line-height:17px;font-size:13px;color:#1a1a1a;letter-spacing:-0.300px;left:972px;transform:scaleX(0.9770);transform-origin:0 50%;">стандартные</span>
<span class="t" style="top:200.5px;line-height:17px;font-size:13px;color:#1a1a1a;letter-spacing:-0.300px;left:1051.8px;transform:scaleX(0.9935);transform-origin:0 50%;">настройки</span>
<div class="b " style="left:826.3px;top:226.3px;width:10px;height:10px;background:#fff;border:1px solid #b0b0b0;"></div>
<div class="b " style="left:828.3px;top:230.8px;width:6px;height:1px;background:#222;"></div>
<span class="t" style="top:223.5px;line-height:17px;font-size:13px;color:#000;font-weight:700;right:488px;">Кнопки устройств в списке дисков панели</span>
<span class="t" style="top:223.5px;line-height:17px;font-size:13px;color:#000;font-weight:700;letter-spacing:-0.300px;left:1118px;transform:scaleX(0.9580);transform-origin:0 50%;">файлов</span>
<div class="b " style="left:816px;top:665.5px;width:72px;height:20px;background:#fdfdfd;border:1px solid #d2d2d2;border-bottom-color:#bdbdbd;border-radius:4px;"></div>
<span class="t" style="top:668.3px;line-height:15px;font-size:11px;color:#111;letter-spacing:0.150px;left:451.2px;width:800px;text-align:center;text-indent:0.150px;">Импорт</span>
<div class="b " style="left:901px;top:665.5px;width:72px;height:20px;background:#fdfdfd;border:1px solid #d2d2d2;border-bottom-color:#bdbdbd;border-radius:4px;"></div>
<span class="t" style="top:668.3px;line-height:15px;font-size:11px;color:#111;letter-spacing:0.146px;left:536.2px;width:800px;text-align:center;text-indent:0.146px;">Экспорт</span>
<div class="b " style="left:1345px;top:665.5px;width:72px;height:20px;background:#fdfdfd;border:1px solid #d2d2d2;border-bottom-color:#bdbdbd;border-radius:4px;"></div>
<span class="t" style="top:668.3px;line-height:15px;font-size:11px;color:#111;letter-spacing:-0.181px;left:980.2px;width:800px;text-align:center;text-indent:-0.181px;">Сохранить</span>
<div class="b " style="left:1428px;top:665.5px;width:72px;height:20px;background:#fdfdfd;border:1px solid #d2d2d2;border-bottom-color:#bdbdbd;border-radius:4px;"></div>
<span class="t" style="top:668.3px;line-height:15px;font-size:11px;color:#111;letter-spacing:-0.050px;left:1063.2px;width:800px;text-align:center;text-indent:-0.050px;">Отмена</span>
<div class="b " style="left:1511px;top:665.5px;width:72px;height:20px;background:#f5f5f5;border:1px solid #ececec;border-radius:4px;"></div>
<span class="t" style="top:668.3px;line-height:15px;font-size:11px;color:#a3a3a3;letter-spacing:-0.078px;left:1146.2px;width:800px;text-align:center;text-indent:-0.078px;">Применить</span>
<div class="b " style="left:803px;top:698px;width:794px;height:1px;background:#6e6e6e;"></div>
<div class="b " style="left:806px;top:699px;width:79px;height:18.5px;background:#4a8fdc;border:1px solid #4079bb;border-top:none;"></div>
<svg style="left:810px;top:699.5px" width="16" height="16" viewBox="0 0 16 16"><path d="M4 5.6H13.2L15.4 8.5H1.6Z" fill="#f4f4f4" stroke="#cfcfcf" stroke-width=".4"/><rect x="1" y="0" width="3.2" height="3.2" fill="#1e8ad6"/><rect x="4.8" y="0" width="3.2" height="3.2" fill="#1e8ad6"/><rect x="1" y="3.8" width="3.2" height="3.2" fill="#1e8ad6"/><rect x="4.8" y="3.8" width="3.2" height="3.2" fill="#1e8ad6"/><rect x="1.5" y="8.3" width="14" height="3.6" rx=".8" fill="#2b2b2b"/><rect x="1.5" y="8.3" width="14" height="1" rx=".5" fill="#6a6a6a"/><rect x="3.5" y="9.6" width="1.2" height="1" fill="#bdbdbd"/></svg>
<span class="t" style="top:700px;line-height:17px;font-size:13px;color:#4577b8;letter-spacing:0.501px;left:830px;">[C:] \</span>
<svg style="left:870px;top:705px" width="6" height="6" viewBox="0 0 6 6"><path d="M.5 .5L5.5 5.5M5.5 .5L.5 5.5" stroke="#dbe9f8" stroke-width="1.2"/></svg>
<div class="b " style="left:884.5px;top:699px;width:169px;height:18.5px;background:#d28fbd;border:1px solid #b07fa0;border-top:none;"></div>
<svg style="left:888.6px;top:699.6px" width="16" height="16" viewBox="0 0 16 16"><rect x="6.5" y=".3" width="3" height="4" rx=".7" transform="rotate(0 8 8)" fill="#cfcfcf" stroke="#8e8e8e" stroke-width=".8"/><rect x="6.5" y=".3" width="3" height="4" rx=".7" transform="rotate(45 8 8)" fill="#cfcfcf" stroke="#8e8e8e" stroke-width=".8"/><rect x="6.5" y=".3" width="3" height="4" rx=".7" transform="rotate(90 8 8)" fill="#cfcfcf" stroke="#8e8e8e" stroke-width=".8"/><rect x="6.5" y=".3" width="3" height="4" rx=".7" transform="rotate(135 8 8)" fill="#cfcfcf" stroke="#8e8e8e" stroke-width=".8"/><rect x="6.5" y=".3" width="3" height="4" rx=".7" transform="rotate(180 8 8)" fill="#cfcfcf" stroke="#8e8e8e" stroke-width=".8"/><rect x="6.5" y=".3" width="3" height="4" rx=".7" transform="rotate(225 8 8)" fill="#cfcfcf" stroke="#8e8e8e" stroke-width=".8"/><rect x="6.5" y=".3" width="3" height="4" rx=".7" transform="rotate(270 8 8)" fill="#cfcfcf" stroke="#8e8e8e" stroke-width=".8"/><rect x="6.5" y=".3" width="3" height="4" rx=".7" transform="rotate(315 8 8)" fill="#cfcfcf" stroke="#8e8e8e" stroke-width=".8"/><circle cx="8" cy="8" r="5.3" fill="#d6d6d6" stroke="#8e8e8e" stroke-width=".8"/><circle cx="8" cy="8" r="4.7" fill="#d6d6d6"/><circle cx="8" cy="8" r="2.4" fill="#f4f4f4" stroke="#8e8e8e" stroke-width=".9"/></svg>
<span class="t" style="top:700.75px;line-height:16.5px;font-size:12.5px;color:#111;letter-spacing:-0.100px;left:909px;">Основные настройки</span>
<svg style="left:1039px;top:705px" width="6" height="6" viewBox="0 0 6 6"><path d="M.5 .5L5.5 5.5M5.5 .5L.5 5.5" stroke="#e3c3d6" stroke-width="1.1"/></svg>
<div class="b " style="left:1053.5px;top:697.5px;width:201px;height:21.5px;background:#ffb1e8;border:1px solid #857a82;border-top:none;border-left-color:#e0a0cc;"></div>
<svg style="left:1057.6px;top:700.4px" width="16" height="16" viewBox="0 0 16 16"><rect x="6.5" y=".3" width="3" height="4" rx=".7" transform="rotate(0 8 8)" fill="#cfcfcf" stroke="#8e8e8e" stroke-width=".8"/><rect x="6.5" y=".3" width="3" height="4" rx=".7" transform="rotate(45 8 8)" fill="#cfcfcf" stroke="#8e8e8e" stroke-width=".8"/><rect x="6.5" y=".3" width="3" height="4" rx=".7" transform="rotate(90 8 8)" fill="#cfcfcf" stroke="#8e8e8e" stroke-width=".8"/><rect x="6.5" y=".3" width="3" height="4" rx=".7" transform="rotate(135 8 8)" fill="#cfcfcf" stroke="#8e8e8e" stroke-width=".8"/><rect x="6.5" y=".3" width="3" height="4" rx=".7" transform="rotate(180 8 8)" fill="#cfcfcf" stroke="#8e8e8e" stroke-width=".8"/><rect x="6.5" y=".3" width="3" height="4" rx=".7" transform="rotate(225 8 8)" fill="#cfcfcf" stroke="#8e8e8e" stroke-width=".8"/><rect x="6.5" y=".3" width="3" height="4" rx=".7" transform="rotate(270 8 8)" fill="#cfcfcf" stroke="#8e8e8e" stroke-width=".8"/><rect x="6.5" y=".3" width="3" height="4" rx=".7" transform="rotate(315 8 8)" fill="#cfcfcf" stroke="#8e8e8e" stroke-width=".8"/><circle cx="8" cy="8" r="5.3" fill="#d6d6d6" stroke="#8e8e8e" stroke-width=".8"/><circle cx="8" cy="8" r="4.7" fill="#d6d6d6"/><circle cx="8" cy="8" r="2.4" fill="#f4f4f4" stroke="#8e8e8e" stroke-width=".9"/></svg>
<span class="t" style="top:701.75px;line-height:16.5px;font-size:12.5px;color:#111;letter-spacing:-0.153px;left:1078.5px;">Настройки панели файлов</span>
<svg style="left:1240px;top:706px" width="6" height="6" viewBox="0 0 6 6"><path d="M.5 4.5L3 1.5 5.5 4.5" fill="none" stroke="#c9a0bd" stroke-width="1"/></svg>
<div class="b " style="left:0px;top:723px;width:1600px;height:1px;background:#fbfbfb;"></div>
<div class="b " style="left:0px;top:839px;width:1600px;height:1px;background:#a8a8a8;"></div>
<div class="b " style="left:0px;top:840px;width:1600px;height:1px;background:#fff;"></div>
<div class="b " style="left:1598px;top:845px;width:2px;height:14px;background:#dadada;"></div>
<span class="t" style="top:734.5px;line-height:15px;font-size:11px;color:#111;letter-spacing:0.011px;left:82px;">Справка</span>
<svg style="left:248px;top:733px" width="16" height="16" viewBox="0 0 16 16"><path d="M0.6 0.6H8.4L12.4 4.6V14.4H0.6Z" fill="#e4f0fa" stroke="#318fd4" stroke-width="1.2" stroke-linejoin="round"/><path d="M1.6 8.1H11.4V13.4H1.6Z" fill="#b4d5ef" opacity=".8"/><path d="M8.4 0.6V3.5999999999999996Q8.4 4.6 9.4 4.6H12.4" fill="#fff" stroke="#318fd4" stroke-width="1.1"/><circle cx="10" cy="10" r="5.5" fill="#8fd04a" stroke="#4e9a1c" stroke-width=".8"/><path d="M7 9.5A3 3 0 0 1 12.5 8.2M13 10.5A3 3 0 0 1 7.5 11.8" stroke="#fff" stroke-width="1.3" fill="none"/><path d="M13.5 6.5V9H11ZM6.5 13.5V11H9Z" fill="#fff"/></svg>
<span class="t" style="top:734.5px;line-height:15px;font-size:11px;color:#111;letter-spacing:-0.151px;left:267px;">Обновить (F2)</span>
<svg style="left:447px;top:733px" width="16" height="16" viewBox="0 0 16 16"><path d="M0.6 0.6H8.4L12.4 4.6V14.4H0.6Z" fill="#e4f0fa" stroke="#318fd4" stroke-width="1.2" stroke-linejoin="round"/><path d="M1.6 8.1H11.4V13.4H1.6Z" fill="#b4d5ef" opacity=".8"/><path d="M8.4 0.6V3.5999999999999996Q8.4 4.6 9.4 4.6H12.4" fill="#fff" stroke="#318fd4" stroke-width="1.1"/><circle cx="7.5" cy="8.5" r="3.8" fill="#d7e9f7" fill-opacity=".8" stroke="#8a9aa8" stroke-width="1.1"/><path d="M10.5 11.5L14 15" stroke="#e39a3c" stroke-width="2.2" stroke-linecap="round"/></svg>
<span class="t" style="top:734.5px;line-height:15px;font-size:11px;color:#111;letter-spacing:-0.104px;left:466px;">Просмотр (F3)</span>
<svg style="left:652px;top:733px" width="16" height="16" viewBox="0 0 16 16"><path d="M0.6 0.6H8.4L12.4 4.6V14.4H0.6Z" fill="#e4f0fa" stroke="#318fd4" stroke-width="1.2" stroke-linejoin="round"/><path d="M1.6 8.1H11.4V13.4H1.6Z" fill="#b4d5ef" opacity=".8"/><path d="M8.4 0.6V3.5999999999999996Q8.4 4.6 9.4 4.6H12.4" fill="#fff" stroke="#318fd4" stroke-width="1.1"/><path d="M6 13.5L7 10.5 13.5 4 16 6.5 9.5 13Z" fill="#f0b432" stroke="#b5761a" stroke-width=".7"/><path d="M13.5 4L14.5 3 17 5.5 16 6.5Z" fill="#b56ab0"/><path d="M6 13.5L7 10.5 9.5 13Z" fill="#f3dcb4"/></svg>
<span class="t" style="top:734.5px;line-height:15px;font-size:11px;color:#111;letter-spacing:-0.117px;left:672px;">Правка (F4)</span>
<svg style="left:840px;top:733px" width="16" height="16" viewBox="0 0 16 16"><path d="M0.6 0.6H8.4L12.4 4.6V14.4H0.6Z" fill="#e4f0fa" stroke="#318fd4" stroke-width="1.2" stroke-linejoin="round"/><path d="M1.6 8.1H11.4V13.4H1.6Z" fill="#b4d5ef" opacity=".8"/><path d="M8.4 0.6V3.5999999999999996Q8.4 4.6 9.4 4.6H12.4" fill="#fff" stroke="#318fd4" stroke-width="1.1"/><circle cx="12.6" cy="12.3" r="3.5" fill="#5cb52c" stroke="#3a8a18" stroke-width=".7"/><path d="M10.399999999999999 12.3h4.4" stroke="#fff" stroke-width="1.4"/><path d="M12.6 10.100000000000001v4.4" stroke="#fff" stroke-width="1.4"/></svg>
<span class="t" style="top:734.5px;line-height:15px;font-size:11px;color:#111;letter-spacing:-0.088px;left:860px;">Копировать (F5)</span>
<svg style="left:1035px;top:733px" width="16" height="16" viewBox="0 0 16 16"><path d="M0.6 0.6H8.4L12.4 4.6V14.4H0.6Z" fill="#e4f0fa" stroke="#318fd4" stroke-width="1.2" stroke-linejoin="round"/><path d="M1.6 8.1H11.4V13.4H1.6Z" fill="#b4d5ef" opacity=".8"/><path d="M8.4 0.6V3.5999999999999996Q8.4 4.6 9.4 4.6H12.4" fill="#fff" stroke="#318fd4" stroke-width="1.1"/><path d="M7 9.5H11V7L16 11.5 11 16V13.5H7Z" fill="#7cc62c" stroke="#4b9417" stroke-width=".8"/></svg>
<span class="t" style="top:734.5px;line-height:15px;font-size:11px;color:#111;letter-spacing:-0.094px;left:1055px;">Переместить (F6)</span>
<svg style="left:1229px;top:733px" width="16" height="16" viewBox="0 0 16 16"><path d="M.5 1.5H5L6.5 3H13.5V11.5H.5Z" fill="#f7d978" stroke="#d9a035"/><path d="M2.5 5H15.5L13.5 11.5H.5Z" fill="#fbe7a3" stroke="#d9a035"/><circle cx="12.6" cy="12.3" r="3.5" fill="#5cb52c" stroke="#3a8a18" stroke-width=".7"/><path d="M10.399999999999999 12.3h4.4" stroke="#fff" stroke-width="1.4"/><path d="M12.6 10.100000000000001v4.4" stroke="#fff" stroke-width="1.4"/></svg>
<span class="t" style="top:734.5px;line-height:15px;font-size:11px;color:#111;letter-spacing:-0.039px;left:1249px;">Новый каталог (F7)</span>
<svg style="left:1445px;top:733px" width="16" height="16" viewBox="0 0 16 16"><path d="M0.6 0.6H8.4L12.4 4.6V14.4H0.6Z" fill="#e4f0fa" stroke="#318fd4" stroke-width="1.2" stroke-linejoin="round"/><path d="M1.6 8.1H11.4V13.4H1.6Z" fill="#b4d5ef" opacity=".8"/><path d="M8.4 0.6V3.5999999999999996Q8.4 4.6 9.4 4.6H12.4" fill="#fff" stroke="#318fd4" stroke-width="1.1"/><circle cx="12.6" cy="12.3" r="3.5" fill="#e2452f" stroke="#b52a18" stroke-width=".7"/><path d="M10.399999999999999 12.3h4.4" stroke="#fff" stroke-width="1.4"/></svg>
<span class="t" style="top:734.5px;line-height:15px;font-size:11px;color:#111;letter-spacing:-0.091px;left:1465px;">Удалить (F8)</span>
<svg style="left:78px;top:767px" width="14" height="4" viewBox="0 0 14 4"><rect x="0" y="0" width="14" height="4" rx="1" fill="#3a3a3a"/><rect x="0" y="0" width="14" height="1" fill="#777"/></svg>
<span class="t" style="top:761.5px;line-height:15px;font-size:11px;color:#111;letter-spacing:0.500px;left:96px;">C:\</span>
<svg style="left:276px;top:767px" width="14" height="4" viewBox="0 0 14 4"><rect x="0" y="0" width="14" height="4" rx="1" fill="#3a3a3a"/><rect x="0" y="0" width="14" height="1" fill="#777"/></svg>
<span class="t" style="top:761.5px;line-height:15px;font-size:11px;color:#111;letter-spacing:0.500px;left:295px;">D:\</span>
<svg style="left:476px;top:767px" width="14" height="4" viewBox="0 0 14 4"><rect x="0" y="0" width="14" height="4" rx="1" fill="#3a3a3a"/><rect x="0" y="0" width="14" height="1" fill="#777"/></svg>
<span class="t" style="top:761.5px;line-height:15px;font-size:11px;color:#111;letter-spacing:0.500px;left:495px;">E:\</span>
<svg style="left:675px;top:767px" width="14" height="4" viewBox="0 0 14 4"><rect x="0" y="0" width="14" height="4" rx="1" fill="#3a3a3a"/><rect x="0" y="0" width="14" height="1" fill="#777"/></svg>
<span class="t" style="top:761.5px;line-height:15px;font-size:11px;color:#111;letter-spacing:0.500px;left:694px;">F:\</span>
<svg style="left:873px;top:767px" width="14" height="4" viewBox="0 0 14 4"><rect x="0" y="0" width="14" height="4" rx="1" fill="#3a3a3a"/><rect x="0" y="0" width="14" height="1" fill="#777"/></svg>
<span class="t" style="top:761.5px;line-height:15px;font-size:11px;color:#111;letter-spacing:0.500px;left:891px;">G:\</span>
<svg style="left:1042px;top:760px" width="16" height="16" viewBox="0 0 16 16"><rect x="1.0" y="3.4" width="3.9" height="3.8" fill="#2f9fe6" stroke="#1d7fc4" stroke-width=".5"/><rect x="1.0" y="7.7" width="3.9" height="3.8" fill="#2f9fe6" stroke="#1d7fc4" stroke-width=".5"/><rect x="1.0" y="12.0" width="3.9" height="3.8" fill="#2f9fe6" stroke="#1d7fc4" stroke-width=".5"/><rect x="5.4" y="3.4" width="3.9" height="3.8" fill="#2f9fe6" stroke="#1d7fc4" stroke-width=".5"/><rect x="5.4" y="7.7" width="3.9" height="3.8" fill="#2f9fe6" stroke="#1d7fc4" stroke-width=".5"/><rect x="5.4" y="12.0" width="3.9" height="3.8" fill="#2f9fe6" stroke="#1d7fc4" stroke-width=".5"/><rect x="9.8" y="7.7" width="3.9" height="3.8" fill="#2f9fe6" stroke="#1d7fc4" stroke-width=".5"/><rect x="9.8" y="12.0" width="3.9" height="3.8" fill="#2f9fe6" stroke="#1d7fc4" stroke-width=".5"/><rect x="11.2" y=".7" width="3.4" height="3.4" transform="rotate(45 12.9 2.4)" fill="#2f9fe6" stroke="#1d7fc4" stroke-width=".5"/></svg>
<span class="t" style="top:761.5px;line-height:15px;font-size:11px;color:#111;letter-spacing:-0.074px;left:1063px;">Реестр: HKCU</span>
<span class="t" style="top:761.5px;line-height:15px;font-size:11px;color:#111;letter-spacing:0.112px;left:1229px;">Воспр. музыку из каталога</span>
<svg style="left:1456px;top:760px" width="16" height="16" viewBox="0 0 16 16"><path d="M4.2 2.6H15L14.6 15.4H3Z" fill="#fdfdfd" stroke="#b9c2c8" stroke-width=".6"/><path d="M3.4 1.8H14.2L12.6 14.4H.8Z" fill="#a9d6ec" stroke="#8fc3dd" stroke-width=".5"/><path d="M3 5H13.6M2.6 7.5H13.3M2.2 10H13M1.8 12.5H12.7" stroke="#bfe2f2" stroke-width=".7"/><path d="M4.3 .4V2.4M6.3 .4V2.4M8.3 .4V2.4M10.3 .4V2.4M12.3 .4V2.4M14 .6V2.4" stroke="#3c464e" stroke-width=".9"/></svg>
<span class="t" style="top:761.5px;line-height:15px;font-size:11px;color:#111;letter-spacing:0.110px;left:1476px;">Блокнот</span>
<span class="t" style="top:788.5px;line-height:15px;font-size:11px;color:#111;letter-spacing:0.188px;left:69px;">Показать всё</span>
<span class="t" style="top:788.5px;line-height:15px;font-size:11px;color:#111;letter-spacing:0.131px;left:259px;">Скрыть каталоги</span>
<span class="t" style="top:788.5px;line-height:15px;font-size:11px;color:#111;letter-spacing:0.057px;left:446px;">Скрыть исполняемые</span>
<span class="t" style="top:788.5px;line-height:15px;font-size:11px;color:#111;letter-spacing:0.158px;left:670px;">Скрыть DLL</span>
<span class="t" style="top:788.5px;line-height:15px;font-size:11px;color:#111;letter-spacing:-0.050px;left:832px;">Инвертировать выделение</span>
<svg style="left:1246px;top:787px" width="16" height="16" viewBox="0 0 16 16"><rect x="0" y="0" width="16" height="16" fill="#7b7b7b"/><rect x="3.6" y="2" width="8.8" height="12" rx=".8" fill="#fbfbfb" stroke="#6a6a6a" stroke-width=".5"/><rect x="5" y="3.6" width="6" height="2.2" fill="#8a8a8a"/><rect x="5.2" y="7.4" width="1.3" height="1.2" fill="#6f6f6f"/><rect x="7.3" y="7.4" width="1.3" height="1.2" fill="#6f6f6f"/><rect x="9.4" y="7.4" width="1.3" height="1.2" fill="#6f6f6f"/><rect x="5.2" y="9.4" width="1.3" height="1.2" fill="#6f6f6f"/><rect x="7.3" y="9.4" width="1.3" height="1.2" fill="#6f6f6f"/><rect x="9.4" y="9.4" width="1.3" height="1.2" fill="#6f6f6f"/><rect x="5.2" y="11.4" width="1.3" height="1.2" fill="#6f6f6f"/><rect x="7.3" y="11.4" width="1.3" height="1.2" fill="#6f6f6f"/><rect x="9.4" y="11.4" width="1.3" height="1.2" fill="#6f6f6f"/></svg>
<span class="t" style="top:788.5px;line-height:15px;font-size:11px;color:#111;letter-spacing:-0.019px;left:1266px;">Калькулятор</span>
<span class="t" style="top:788.5px;line-height:15px;font-size:11px;color:#111;letter-spacing:0.089px;left:1429px;">Управление компьютером</span>
<span class="t" style="top:815.5px;line-height:15px;font-size:11px;color:#111;letter-spacing:-0.084px;left:69px;">Выделить всё</span>
<span class="t" style="top:815.5px;line-height:15px;font-size:11px;color:#111;letter-spacing:-0.109px;left:266px;">Выделить MP3</span>
<span class="t" style="top:815.5px;line-height:15px;font-size:11px;color:#111;letter-spacing:0.009px;left:452px;">Выделить картинки</span>
<span class="t" style="top:815.5px;line-height:15px;font-size:11px;color:#111;letter-spacing:-0.057px;left:644px;">Запомнить выделение</span>
<span class="t" style="top:815.5px;line-height:15px;font-size:11px;color:#111;letter-spacing:-0.114px;left:839px;">Выделить недостающие</span>
<span class="t" style="top:815.5px;line-height:15px;font-size:11px;color:#111;letter-spacing:-0.110px;left:1046px;">Выделить дубликаты</span>
<span class="t" style="top:815.5px;line-height:15px;font-size:11px;color:#111;letter-spacing:0.011px;left:1255px;">Диспетчер задач</span>
<span class="t" style="top:815.5px;line-height:15px;font-size:11px;color:#111;letter-spacing:0.133px;left:1427px;">Режим мастера (Вкл/Выкл)</span>
<div class="b " style="left:483px;top:220px;width:635px;height:413.5px;background:#f0f0f0;border-radius:5px;box-shadow:0 4px 13px rgba(0,0,0,.11),0 1px 3px rgba(0,0,0,.07);"></div>
<div class="b " style="left:483px;top:220px;width:635px;height:413.5px;border:1px solid #2586cf;border-radius:5px;"></div>
<div class="b " style="left:483px;top:220px;width:635px;height:31px;background:#1375b5;border-radius:5px 5px 0 0;"></div>
<span class="t" style="top:228px;line-height:16px;font-size:12px;color:#fff;letter-spacing:-0.111px;left:492.7px;">Менеджер</span>
<span class="t" style="top:228px;line-height:16px;font-size:12px;color:#fff;letter-spacing:0.283px;left:554px;">расширений/</span>
<span class="t" style="top:228px;line-height:16px;font-size:12px;color:#fff;letter-spacing:0.036px;left:630px;">Подключаемых</span>
<span class="t" style="top:228px;line-height:16px;font-size:12px;color:#fff;letter-spacing:-0.090px;left:721px;">модулей</span>
<div class="b " style="left:1097px;top:228px;width:19px;height:19px;background:#c9504e;"></div>
<span class="t" style="top:229.6px;line-height:14px;font-size:10px;color:#fff;font-weight:700;left:706.6px;width:800px;text-align:center;">x</span>
<span class="t" style="top:263.5px;line-height:15px;font-size:11px;color:#111;letter-spacing:-0.094px;left:519px;">Тип расширения :</span>
<div class="b " style="left:615px;top:262px;width:212px;height:21px;background:#fcfcfc;border:1px solid #dadada;border-bottom-color:#c4c4c4;border-radius:3px;"></div>
<span class="t" style="top:265.5px;line-height:15px;font-size:11px;color:#111;letter-spacing:-0.196px;left:618px;">Расширения</span>
<svg style="left:814.5px;top:270.5px" width="9" height="5" viewBox="0 0 9 5"><path d="M.5 .5L4.5 4.5 8.5 .5" fill="none" stroke="#5c5c5c" stroke-width="1"/></svg>
<div class="b " style="left:495px;top:288px;width:611px;height:153px;background:#fff;border:1px solid #cfcfcf;border-top:2px solid #6d6d6d;border-left:2px solid #858585;"></div>
<div class="b " style="left:497px;top:290px;width:591px;height:20px;background:#f4f4f4;border-bottom:1px solid #a9a9a9;border-right:1px solid #c9c9c9;"></div>
<div class="b " style="left:1088px;top:290px;width:17px;height:150px;background:#fbfbfb;"></div>
<div class="b " style="left:1096px;top:308px;width:2px;height:64px;background:#8b8b8b;"></div>
<div class="b " style="left:696px;top:292px;width:1px;height:17px;background:#c4c4c4;"></div>
<div class="b " style="left:846px;top:292px;width:1px;height:17px;background:#c4c4c4;"></div>
<div class="b " style="left:926px;top:292px;width:1px;height:17px;background:#c4c4c4;"></div>
<div class="b " style="left:1006px;top:292px;width:1px;height:17px;background:#c4c4c4;"></div>
<span class="t" style="top:293.5px;line-height:15px;font-size:11px;color:#111;letter-spacing:-0.500px;left:502.3px;">Имя</span>
<span class="t" style="top:293.5px;line-height:15px;font-size:11px;color:#111;letter-spacing:0.282px;left:703px;">Автор</span>
<span class="t" style="top:293.5px;line-height:15px;font-size:11px;color:#111;letter-spacing:-0.194px;left:852px;">Версия</span>
<span class="t" style="top:293.5px;line-height:15px;font-size:11px;color:#111;letter-spacing:-0.092px;left:932px;">Интерфейс</span>
<span class="t" style="top:293.5px;line-height:15px;font-size:11px;color:#111;letter-spacing:0.058px;left:1012px;">Файл</span>
<div class="b" style="left:503px;top:312.7px;width:12px;height:12px;background:#1a73c4;border-radius:2px;"></div><svg style="left:505px;top:315.7px" width="8" height="7" viewBox="0 0 8 7"><path d="M.8 3L3.2 5.5 7.5 .8" fill="none" stroke="#fff" stroke-width="1.4"/></svg>
<span class="t" style="top:312px;line-height:15px;font-size:11px;color:#111;letter-spacing:-0.149px;left:522.3px;">Explorer Panel</span>
<span class="t" style="top:312px;line-height:15px;font-size:11px;color:#111;letter-spacing:-0.245px;left:700.3px;">Mathias Svensson</span>
<span class="t" style="top:312px;line-height:15px;font-size:11px;color:#111;letter-spacing:0.263px;left:851.3px;">1.9.0.0</span>
<span class="t" style="top:312px;line-height:15px;font-size:11px;color:#111;letter-spacing:0.065px;left:932.1px;">1.92.0.0</span>
<div class="b" style="left:503px;top:327.7px;width:12px;height:12px;background:#1a73c4;border-radius:2px;"></div><svg style="left:505px;top:330.7px" width="8" height="7" viewBox="0 0 8 7"><path d="M.8 3L3.2 5.5 7.5 .8" fill="none" stroke="#fff" stroke-width="1.4"/></svg>
<span class="t" style="top:327px;line-height:15px;font-size:11px;color:#111;letter-spacing:-0.132px;left:522.3px;">Settings Panel</span>
<span class="t" style="top:327px;line-height:15px;font-size:11px;color:#111;letter-spacing:-0.245px;left:700.3px;">Mathias Svensson</span>
<span class="t" style="top:327px;line-height:15px;font-size:11px;color:#111;letter-spacing:0.263px;left:851.3px;">1.2.0.0</span>
<span class="t" style="top:327px;line-height:15px;font-size:11px;color:#111;letter-spacing:0.065px;left:932.1px;">1.92.0.0</span>
<div class="b" style="left:503px;top:342.7px;width:12px;height:12px;background:#1a73c4;border-radius:2px;"></div><svg style="left:505px;top:345.7px" width="8" height="7" viewBox="0 0 8 7"><path d="M.8 3L3.2 5.5 7.5 .8" fill="none" stroke="#fff" stroke-width="1.4"/></svg>
<span class="t" style="top:342px;line-height:15px;font-size:11px;color:#111;letter-spacing:-0.300px;left:522.3px;transform:scaleX(0.9920);transform-origin:0 50%;">File Search</span>
<span class="t" style="top:342px;line-height:15px;font-size:11px;color:#111;letter-spacing:-0.245px;left:700.3px;">Mathias Svensson</span>
<span class="t" style="top:342px;line-height:15px;font-size:11px;color:#111;letter-spacing:0.263px;left:851.3px;">1.1.0.0</span>
<span class="t" style="top:342px;line-height:15px;font-size:11px;color:#111;letter-spacing:0.065px;left:932.1px;">1.92.0.0</span>
<div class="b" style="left:503px;top:357.7px;width:12px;height:12px;background:#1a73c4;border-radius:2px;"></div><svg style="left:505px;top:360.7px" width="8" height="7" viewBox="0 0 8 7"><path d="M.8 3L3.2 5.5 7.5 .8" fill="none" stroke="#fff" stroke-width="1.4"/></svg>
<span class="t" style="top:357px;line-height:15px;font-size:11px;color:#111;letter-spacing:-0.300px;left:522.3px;transform:scaleX(0.9793);transform-origin:0 50%;">FSFTP Script</span>
<span class="t" style="top:357px;line-height:15px;font-size:11px;color:#111;letter-spacing:-0.245px;left:700.3px;">Mathias Svensson</span>
<span class="t" style="top:357px;line-height:15px;font-size:11px;color:#111;letter-spacing:0.263px;left:851.3px;">1.0.0.0</span>
<span class="t" style="top:357px;line-height:15px;font-size:11px;color:#111;letter-spacing:0.065px;left:932.1px;">1.92.0.0</span>
<span class="t" style="top:357px;line-height:15px;font-size:11px;color:#111;letter-spacing:-0.300px;left:1010.3px;transform:scaleX(0.9808);transform-origin:0 50%;">FSFTP.dll</span>
<div class="b" style="left:503px;top:372.7px;width:12px;height:12px;background:#1a73c4;border-radius:2px;"></div><svg style="left:505px;top:375.7px" width="8" height="7" viewBox="0 0 8 7"><path d="M.8 3L3.2 5.5 7.5 .8" fill="none" stroke="#fff" stroke-width="1.4"/></svg>
<span class="t" style="top:372px;line-height:15px;font-size:11px;color:#111;letter-spacing:-0.045px;left:522.3px;">Audio Tools</span>
<span class="t" style="top:372px;line-height:15px;font-size:11px;color:#111;letter-spacing:-0.245px;left:700.3px;">Mathias Svensson</span>
<span class="t" style="top:372px;line-height:15px;font-size:11px;color:#111;letter-spacing:0.263px;left:851.3px;">1.0.0.0</span>
<span class="t" style="top:372px;line-height:15px;font-size:11px;color:#111;letter-spacing:0.065px;left:932.1px;">1.92.0.0</span>
<span class="t" style="top:372px;line-height:15px;font-size:11px;color:#111;letter-spacing:0.017px;left:1010.3px;">MCAudioTo...</span>
<div class="b" style="left:503px;top:387.7px;width:12px;height:12px;background:#1a73c4;border-radius:2px;"></div><svg style="left:505px;top:390.7px" width="8" height="7" viewBox="0 0 8 7"><path d="M.8 3L3.2 5.5 7.5 .8" fill="none" stroke="#fff" stroke-width="1.4"/></svg>
<span class="t" style="top:387px;line-height:15px;font-size:11px;color:#111;letter-spacing:-0.180px;left:522.3px;">Language Editor</span>
<span class="t" style="top:387px;line-height:15px;font-size:11px;color:#111;letter-spacing:-0.245px;left:700.3px;">Mathias Svensson</span>
<span class="t" style="top:387px;line-height:15px;font-size:11px;color:#111;letter-spacing:0.263px;left:851.3px;">0.1.2.0</span>
<span class="t" style="top:387px;line-height:15px;font-size:11px;color:#111;letter-spacing:0.065px;left:932.1px;">1.92.0.0</span>
<span class="t" style="top:387px;line-height:15px;font-size:11px;color:#111;letter-spacing:-0.124px;left:1010.3px;">MCLanEdito...</span>
<div class="b" style="left:503px;top:402.7px;width:12px;height:12px;background:#1a73c4;border-radius:2px;"></div><svg style="left:505px;top:405.7px" width="8" height="7" viewBox="0 0 8 7"><path d="M.8 3L3.2 5.5 7.5 .8" fill="none" stroke="#fff" stroke-width="1.4"/></svg>
<span class="t" style="top:402px;line-height:15px;font-size:11px;color:#111;letter-spacing:-0.047px;left:522.3px;">Picture Tools</span>
<span class="t" style="top:402px;line-height:15px;font-size:11px;color:#111;letter-spacing:-0.245px;left:700.3px;">Mathias Svensson</span>
<span class="t" style="top:402px;line-height:15px;font-size:11px;color:#111;letter-spacing:0.263px;left:851.3px;">1.0.0.0</span>
<span class="t" style="top:402px;line-height:15px;font-size:11px;color:#111;letter-spacing:0.065px;left:932.1px;">1.92.0.0</span>
<span class="t" style="top:402px;line-height:15px;font-size:11px;color:#111;letter-spacing:0.017px;left:1010.3px;">MCPictureT...</span>
<div class="b" style="left:503px;top:417.7px;width:12px;height:12px;background:#1a73c4;border-radius:2px;"></div><svg style="left:505px;top:420.7px" width="8" height="7" viewBox="0 0 8 7"><path d="M.8 3L3.2 5.5 7.5 .8" fill="none" stroke="#fff" stroke-width="1.4"/></svg>
<span class="t" style="top:417px;line-height:15px;font-size:11px;color:#111;letter-spacing:-0.300px;left:522.3px;transform:scaleX(0.9955);transform-origin:0 50%;">MCPictureViewer</span>
<span class="t" style="top:417px;line-height:15px;font-size:11px;color:#111;letter-spacing:-0.245px;left:700.3px;">Mathias Svensson</span>
<span class="t" style="top:417px;line-height:15px;font-size:11px;color:#111;letter-spacing:0.263px;left:851.3px;">1.0.0.0</span>
<span class="t" style="top:417px;line-height:15px;font-size:11px;color:#111;letter-spacing:0.065px;left:932.1px;">1.92.0.0</span>
<span class="t" style="top:417px;line-height:15px;font-size:11px;color:#111;letter-spacing:0.017px;left:1010.3px;">MCPictureT...</span>
<div class="b" style="left:503px;top:432.7px;width:12px;height:12px;background:#1a73c4;border-radius:2px;"></div><svg style="left:505px;top:435.7px" width="8" height="7" viewBox="0 0 8 7"><path d="M.8 3L3.2 5.5 7.5 .8" fill="none" stroke="#fff" stroke-width="1.4"/></svg>
<span class="t" style="top:432px;line-height:15px;font-size:11px;color:#111;letter-spacing:-0.200px;left:522.3px;">Special Tools</span>
<span class="t" style="top:432px;line-height:15px;font-size:11px;color:#111;letter-spacing:-0.245px;left:700.3px;">Mathias Svensson</span>
<span class="t" style="top:432px;line-height:15px;font-size:11px;color:#111;letter-spacing:0.263px;left:851.3px;">1.0.0.0</span>
<span class="t" style="top:432px;line-height:15px;font-size:11px;color:#111;letter-spacing:0.065px;left:932.1px;">1.92.0.0</span>
<span class="t" style="top:432px;line-height:15px;font-size:11px;color:#111;letter-spacing:-0.300px;left:1010.3px;transform:scaleX(0.9932);transform-origin:0 50%;">MCSpecial.dll</span>
<div class="b " style="left:484px;top:440px;width:633px;height:14px;background:#f0f0f0;"></div>
<div class="b " style="left:495px;top:440px;width:611px;height:1px;background:#e3e3e3;"></div>
<div class="b " style="left:496px;top:458px;width:437px;height:163px;border:1px solid #dcdcdc;"></div>
<div class="b " style="left:501px;top:452px;width:52px;height:12px;background:#f0f0f0;"></div>
<span class="t" style="top:450.5px;line-height:15px;font-size:11px;color:#111;letter-spacing:-0.013px;left:503.5px;">Свойства</span>
<span class="t" style="top:466.5px;line-height:15px;font-size:11px;color:#111;right:1013.39px;">Название:</span>
<span class="t" style="top:484.5px;line-height:15px;font-size:11px;color:#111;letter-spacing:-0.045px;right:1013.44px;">Веб-адрес:</span>
<span class="t" style="top:502.5px;line-height:15px;font-size:11px;color:#111;letter-spacing:-0.051px;right:1013.45px;">Расположение:</span>
<span class="t" style="top:520.5px;line-height:15px;font-size:11px;color:#111;letter-spacing:-0.081px;right:1013.48px;">Состояние:</span>
<span class="t" style="top:466.5px;line-height:15px;font-size:11px;color:#111;letter-spacing:-0.149px;left:594.5px;">Explorer Panel</span>
<span class="t" style="top:484.5px;line-height:15px;font-size:11px;color:#0c0cdc;letter-spacing:0.067px;left:594.5px;">http:\\www.multicommander.com</span>
<span class="t" style="top:502.5px;line-height:15px;font-size:11px;color:#111;letter-spacing:-0.040px;left:594.5px;">Внутреннее</span>
<span class="t" style="top:520.5px;line-height:15px;font-size:11px;color:#111;letter-spacing:0.067px;left:594.5px;">Включено</span>
<div class="b " style="left:594px;top:539px;width:12px;height:12px;background:#1a73c4;border-radius:2px;"></div>
<svg style="left:596px;top:542px" width="8" height="7" viewBox="0 0 8 7"><path d="M.8 3L3.2 5.5 7.5 .8" fill="none" stroke="#fff" stroke-width="1.4"/></svg>
<span class="t" style="top:537.5px;line-height:15px;font-size:11px;color:#111;letter-spacing:0.226px;left:610.3px;">Автозагрузка</span>
<span class="t" style="top:552.5px;line-height:15px;font-size:11px;color:#111;letter-spacing:-0.201px;left:509.5px;">Описание</span>
<div class="b " style="left:508px;top:572px;width:412px;height:48px;background:#f1f1f1;border:1px solid #e4e4e4;border-bottom:1px solid #8a8a8a;border-radius:2px;"></div>
<div class="b " style="left:902px;top:573px;width:1px;height:46px;background:#e6e6e6;"></div>
<span class="t" style="top:574px;line-height:15px;font-size:11px;color:#111;letter-spacing:-0.294px;left:512.3px;">Browse</span>
<span class="t" style="top:574px;line-height:15px;font-size:11px;color:#111;left:158.9px;width:800px;text-align:center;">the</span>
<span class="t" style="top:574px;line-height:15px;font-size:11px;color:#111;letter-spacing:-0.243px;left:570.3px;">filesystem</span>
<span class="t" style="top:574px;line-height:15px;font-size:11px;color:#111;left:229.5px;width:800px;text-align:center;">and</span>
<span class="t" style="top:574px;line-height:15px;font-size:11px;color:#111;letter-spacing:-0.078px;left:641.8px;">list</span>
<span class="t" style="top:574px;line-height:15px;font-size:11px;color:#111;left:266.25px;width:800px;text-align:center;">the</span>
<span class="t" style="top:574px;line-height:15px;font-size:11px;color:#111;letter-spacing:-0.029px;left:677.3px;">content</span>
<span class="t" style="top:574px;line-height:15px;font-size:11px;color:#111;left:320.65px;width:800px;text-align:center;">of</span>
<span class="t" style="top:574px;line-height:15px;font-size:11px;color:#111;letter-spacing:-0.123px;left:728.5px;">folders.</span>
<span class="t" style="top:574px;line-height:15px;font-size:11px;color:#111;letter-spacing:-0.300px;left:769.8px;transform:scaleX(0.9242);transform-origin:0 50%;">Shows</span>
<span class="t" style="top:574px;line-height:15px;font-size:11px;color:#111;letter-spacing:-0.161px;left:802.8px;">files</span>
<span class="t" style="top:574px;line-height:15px;font-size:11px;color:#111;left:434.4px;width:800px;text-align:center;">and</span>
<span class="t" style="top:574px;line-height:15px;font-size:11px;color:#111;letter-spacing:-0.052px;left:846.5px;">folders</span>
<span class="t" style="top:574px;line-height:15px;font-size:11px;color:#111;left:486.65px;width:800px;text-align:center;">in</span>
<span class="t" style="top:587px;line-height:15px;font-size:11px;color:#111;left:115.05px;width:800px;text-align:center;">a</span>
<span class="t" style="top:587px;line-height:15px;font-size:11px;color:#111;letter-spacing:0.022px;left:521.5px;">list</span>
<span class="t" style="top:587px;line-height:15px;font-size:11px;color:#111;letter-spacing:-0.014px;left:538px;">with</span>
<span class="t" style="top:587px;line-height:15px;font-size:11px;color:#111;letter-spacing:-0.300px;left:561px;transform:scaleX(0.9836);transform-origin:0 50%;">multiple</span>
<span class="t" style="top:587px;line-height:15px;font-size:11px;color:#111;letter-spacing:-0.300px;left:599.8px;transform:scaleX(0.9759);transform-origin:0 50%;">columns.</span>
<svg style="left:906.5px;top:579.5px" width="8" height="5" viewBox="0 0 8 5"><path d="M0 5L4 0 8 5Z" fill="#9a9a9a"/></svg>
<svg style="left:906.5px;top:607.5px" width="8" height="5" viewBox="0 0 8 5"><path d="M0 0L4 5 8 0Z" fill="#9a9a9a"/></svg>
<div class="b " style="left:839px;top:464px;width:80px;height:20px;background:#f5f5f5;border:1px solid #eeeeee;border-radius:4px;"></div>
<span class="t" style="top:467.2px;line-height:15px;font-size:11px;color:#a0a0a0;letter-spacing:0.283px;left:479px;width:800px;text-align:center;text-indent:0.283px;">Настройки...</span>
<div class="b " style="left:839px;top:494px;width:80px;height:20px;background:#f5f5f5;border:1px solid #eeeeee;border-radius:4px;"></div>
<span class="t" style="top:497.2px;line-height:15px;font-size:11px;color:#a0a0a0;letter-spacing:0.016px;left:479px;width:800px;text-align:center;text-indent:0.016px;">Профили...</span>
<div class="b " style="left:970px;top:458px;width:106px;height:21px;background:#fdfdfd;border:1px solid #d2d2d2;border-bottom-color:#bdbdbd;border-radius:4px;"></div>
<span class="t" style="top:461.7px;line-height:15px;font-size:11px;color:#111;letter-spacing:-0.055px;left:623px;width:800px;text-align:center;text-indent:-0.055px;">Сброс настроек</span>
<div class="b " style="left:941px;top:601px;width:71px;height:20px;background:#f5f5f5;border:1px solid #eeeeee;border-radius:4px;"></div>
<span class="t" style="top:604.2px;line-height:15px;font-size:11px;color:#a0a0a0;letter-spacing:0.069px;left:576.5px;width:800px;text-align:center;text-indent:0.069px;">Сохранить</span>
<div class="b " style="left:1032.5px;top:600px;width:73.5px;height:21px;background:#fdfdfd;border:1px solid #1a6fc0;border-radius:4px;"></div>
<span class="t" style="top:603.7px;line-height:15px;font-size:11px;color:#111;letter-spacing:0.307px;left:669.25px;width:800px;text-align:center;text-indent:0.307px;">Закрыть</span>
</div>
</body></html>
